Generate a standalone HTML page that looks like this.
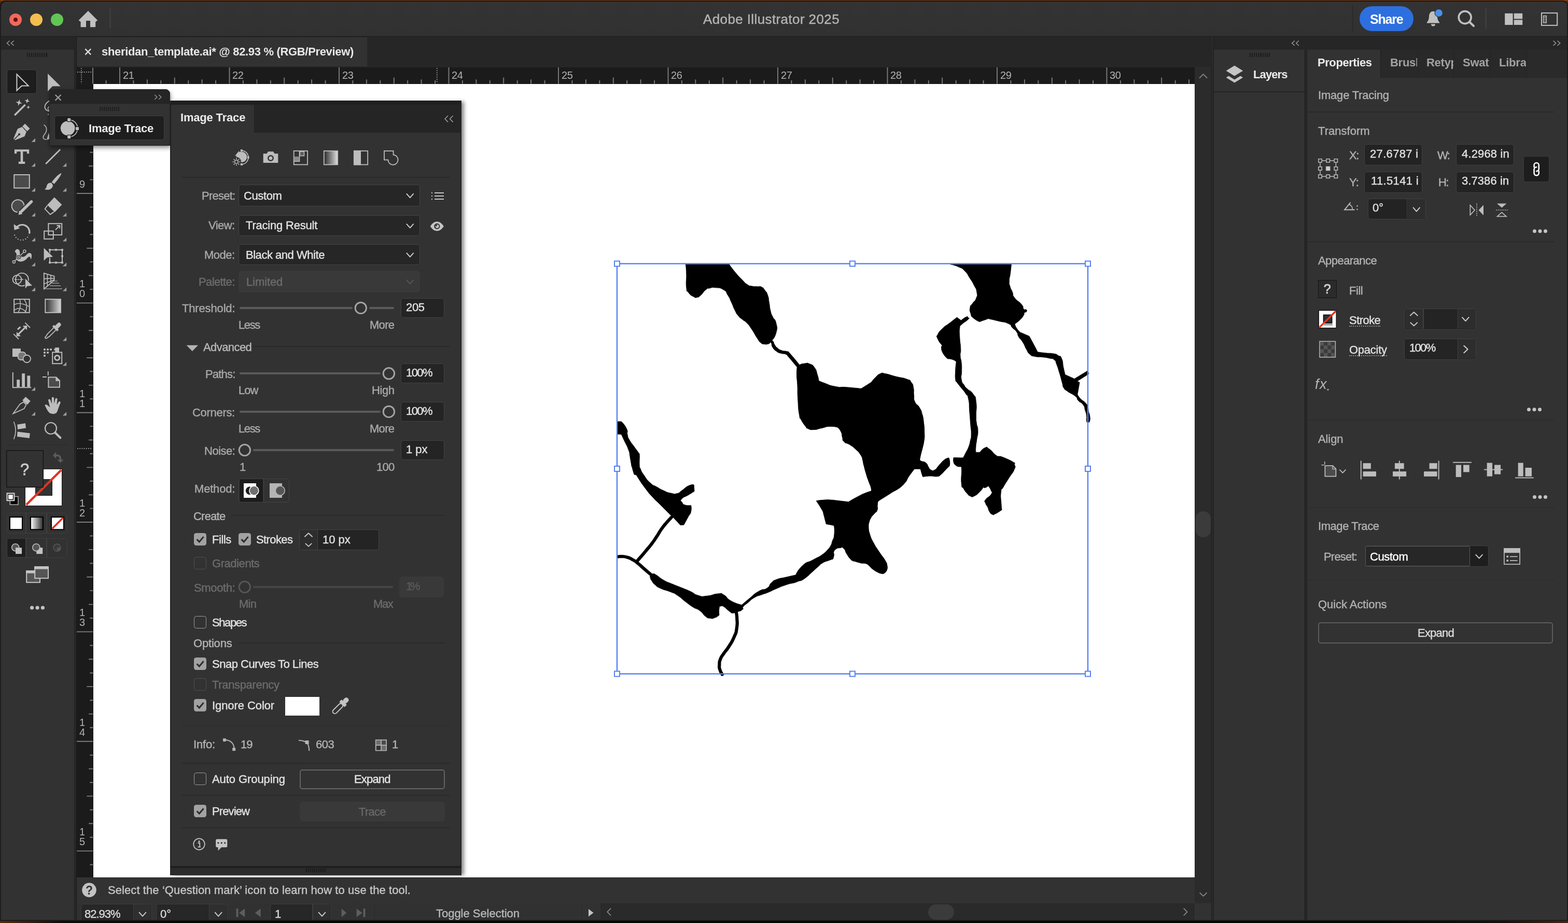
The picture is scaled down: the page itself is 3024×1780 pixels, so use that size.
<!DOCTYPE html>
<html lang="en"><head><meta charset="utf-8"><title>Adobe Illustrator 2025</title>
<style>
html,body{margin:0;padding:0;background:#8a4514;}
body{width:3024px;height:1780px;overflow:hidden;position:relative;font-family:"Liberation Sans",sans-serif;}
div,span,svg{position:absolute;box-sizing:border-box;}
span{white-space:nowrap;will-change:transform;}
svg text{will-change:transform;}
svg{overflow:visible;pointer-events:none;}
svg text{font-family:"Liberation Sans",sans-serif;}
</style></head><body>
<!-- chrome -->
<div style="left:0px;top:0px;width:3024px;height:1780px;background:linear-gradient(#8e4418,#4a260e 3px);"></div>
<div style="left:0px;top:1.4px;width:3024px;height:1779px;background:#161616;border-radius:11px 11px 0 0;"></div>
<div style="left:0px;top:20px;width:3024px;height:1760px;background:#1e1e1e;"></div>
<div style="left:1.6px;top:2.8px;width:3021px;height:67.4px;background:linear-gradient(#333333,#313131);border-radius:10px 10px 0 0;"></div>
<div style="left:1.6px;top:69.2px;width:3021px;height:1.2px;background:#2a2a2a;"></div>
<div style="left:18px;top:26px;width:24px;height:24px;background:#ed6a5e;border-radius:50%;"></div>
<div style="left:58px;top:26px;width:24px;height:24px;background:#f5bf4f;border-radius:50%;"></div>
<div style="left:98px;top:26px;width:24px;height:24px;background:#61c554;border-radius:50%;"></div>
<div style="left:26px;top:34px;width:8px;height:8px;background:#6e0c0a;border-radius:50%;"></div>
<div style="left:211px;top:16px;width:3px;height:39px;background:#3d3d3d;"></div>
<span style="left:1356.00px;top:24.00px;font-size:26px;line-height:26px;color:#b4b4b4;-webkit-text-stroke:0.4px;letter-spacing:0.391px;">Adobe Illustrator 2025</span>
<div style="left:2608px;top:10px;width:2px;height:51px;background:#2a2a2a;"></div>
<div style="left:2622px;top:12px;width:104px;height:48px;background:#2e6fdf;border-radius:24px;"></div>
<span style="left:2641.90px;top:25.00px;font-size:25px;line-height:25px;color:#ffffff;font-weight:700;letter-spacing:-1.217px;">Share</span>
<div style="left:2864px;top:16px;width:3px;height:39px;background:#3d3d3d;"></div>
<div style="left:0px;top:70.4px;width:3024px;height:1710px;background:#1e1e1e;"></div>
<div style="left:144.2px;top:71px;width:2.2px;height:1709px;background:#2a2a2a;"></div>
<div style="left:2517.6px;top:96px;width:2.4px;height:1684px;background:#2a2a2a;"></div>
<div style="left:2337.4px;top:71px;width:2.2px;height:1709px;background:#2a2a2a;"></div>
<div style="left:2px;top:71px;width:141px;height:25px;background:#262626;"></div>
<div style="left:2px;top:96px;width:141px;height:1684px;background:#323232;"></div>
<div style="left:148px;top:71px;width:2188.6px;height:58.7px;background:#262626;"></div>
<div style="left:148px;top:72px;width:560px;height:56.2px;background:#323232;"></div>
<span style="left:196.00px;top:89.00px;font-size:22px;line-height:22px;color:#e8e8e8;font-weight:700;letter-spacing:-0.328px;">sheridan_template.ai* @ 82.93 % (RGB/Preview)</span>
<div style="left:148px;top:129.7px;width:2156px;height:32.3px;background:#1b1b1b;"></div>
<div style="left:148px;top:129.7px;width:32px;height:1562.3px;background:#1b1b1b;"></div>
<div style="left:180px;top:162px;width:2124px;height:1530px;background:#ffffff;"></div>
<div style="left:2304px;top:129px;width:32px;height:1616px;background:#2b2b2b;"></div>
<div style="left:2306px;top:986px;width:29px;height:50px;background:#3b3b3b;border-radius:14px;"></div>
<div style="left:148px;top:1692px;width:2156px;height:53px;background:#323232;"></div>
<span style="left:208.00px;top:1706.00px;font-size:22px;line-height:22px;color:#c6c6c6;-webkit-text-stroke:0.4px;letter-spacing:0.085px;">Select the ‘Question mark’ icon to learn how to use the tool.</span>
<div style="left:148px;top:1742px;width:2156px;height:38px;background:#313131;"></div>
<div style="left:2304px;top:1742px;width:32px;height:38px;background:#323232;"></div>
<div style="left:2341px;top:71px;width:683px;height:25px;background:#262626;"></div>
<div style="left:2341px;top:96px;width:175px;height:1684px;background:#323232;"></div>
<div style="left:2341px;top:176px;width:175px;height:2px;background:#232323;"></div>
<div style="left:2521px;top:96px;width:503px;height:1684px;background:#323232;"></div>
<div style="left:2521px;top:96px;width:503px;height:54px;background:#262626;"></div>
<div style="left:2521px;top:96px;width:141px;height:54px;background:#323232;"></div>
<!-- rulers -->
<span style="left:236.60px;top:135.00px;font-size:20px;line-height:20px;color:#b2b2b2;letter-spacing:-0.323px;">21</span>
<span style="left:448.10px;top:135.00px;font-size:20px;line-height:20px;color:#b2b2b2;letter-spacing:-0.323px;">22</span>
<span style="left:659.60px;top:135.00px;font-size:20px;line-height:20px;color:#b2b2b2;letter-spacing:-0.323px;">23</span>
<span style="left:871.10px;top:135.00px;font-size:20px;line-height:20px;color:#b2b2b2;letter-spacing:-0.323px;">24</span>
<span style="left:1082.60px;top:135.00px;font-size:20px;line-height:20px;color:#b2b2b2;letter-spacing:-0.323px;">25</span>
<span style="left:1294.10px;top:135.00px;font-size:20px;line-height:20px;color:#b2b2b2;letter-spacing:-0.323px;">26</span>
<span style="left:1505.60px;top:135.00px;font-size:20px;line-height:20px;color:#b2b2b2;letter-spacing:-0.323px;">27</span>
<span style="left:1717.10px;top:135.00px;font-size:20px;line-height:20px;color:#b2b2b2;letter-spacing:-0.323px;">28</span>
<span style="left:1928.60px;top:135.00px;font-size:20px;line-height:20px;color:#b2b2b2;letter-spacing:-0.323px;">29</span>
<span style="left:2140.10px;top:135.00px;font-size:20px;line-height:20px;color:#b2b2b2;letter-spacing:-0.323px;">30</span>
<span style="left:153.04px;top:345.00px;font-size:20px;line-height:20px;color:#b2b2b2;">9</span>
<span style="left:153.04px;top:537.00px;font-size:20px;line-height:20px;color:#b2b2b2;">1</span>
<span style="left:153.04px;top:556.00px;font-size:20px;line-height:20px;color:#b2b2b2;">0</span>
<span style="left:153.04px;top:749.00px;font-size:20px;line-height:20px;color:#b2b2b2;">1</span>
<span style="left:153.04px;top:768.00px;font-size:20px;line-height:20px;color:#b2b2b2;">1</span>
<span style="left:153.04px;top:960.00px;font-size:20px;line-height:20px;color:#b2b2b2;">1</span>
<span style="left:153.04px;top:979.00px;font-size:20px;line-height:20px;color:#b2b2b2;">2</span>
<span style="left:153.04px;top:1171.00px;font-size:20px;line-height:20px;color:#b2b2b2;">1</span>
<span style="left:153.04px;top:1190.00px;font-size:20px;line-height:20px;color:#b2b2b2;">3</span>
<span style="left:153.04px;top:1383.00px;font-size:20px;line-height:20px;color:#b2b2b2;">1</span>
<span style="left:153.04px;top:1402.00px;font-size:20px;line-height:20px;color:#b2b2b2;">4</span>
<span style="left:153.04px;top:1594.00px;font-size:20px;line-height:20px;color:#b2b2b2;">1</span>
<span style="left:153.04px;top:1613.00px;font-size:20px;line-height:20px;color:#b2b2b2;">5</span>
<svg width="3024" height="1780" viewBox="0 0 3024 1780" style="left:0;top:0;">
<path d="M204.6 155.1V161.4M231.0 130V161.4M257.4 155.1V161.4M283.9 153.2V161.4M310.3 155.1V161.4M336.8 149.4V161.4M363.2 155.1V161.4M389.6 153.2V161.4M416.1 155.1V161.4M442.5 130V161.4M468.9 155.1V161.4M495.4 153.2V161.4M521.8 155.1V161.4M548.2 149.4V161.4M574.7 155.1V161.4M601.1 153.2V161.4M627.6 155.1V161.4M654.0 130V161.4M680.4 155.1V161.4M706.9 153.2V161.4M733.3 155.1V161.4M759.8 149.4V161.4M786.2 155.1V161.4M812.6 153.2V161.4M839.1 155.1V161.4M865.5 130V161.4M891.9 155.1V161.4M918.4 153.2V161.4M944.8 155.1V161.4M971.2 149.4V161.4M997.7 155.1V161.4M1024.1 153.2V161.4M1050.6 155.1V161.4M1077.0 130V161.4M1103.4 155.1V161.4M1129.9 153.2V161.4M1156.3 155.1V161.4M1182.8 149.4V161.4M1209.2 155.1V161.4M1235.6 153.2V161.4M1262.1 155.1V161.4M1288.5 130V161.4M1314.9 155.1V161.4M1341.4 153.2V161.4M1367.8 155.1V161.4M1394.2 149.4V161.4M1420.7 155.1V161.4M1447.1 153.2V161.4M1473.6 155.1V161.4M1500.0 130V161.4M1526.4 155.1V161.4M1552.9 153.2V161.4M1579.3 155.1V161.4M1605.8 149.4V161.4M1632.2 155.1V161.4M1658.6 153.2V161.4M1685.1 155.1V161.4M1711.5 130V161.4M1737.9 155.1V161.4M1764.4 153.2V161.4M1790.8 155.1V161.4M1817.2 149.4V161.4M1843.7 155.1V161.4M1870.1 153.2V161.4M1896.6 155.1V161.4M1923.0 130V161.4M1949.4 155.1V161.4M1975.9 153.2V161.4M2002.3 155.1V161.4M2028.8 149.4V161.4M2055.2 155.1V161.4M2081.6 153.2V161.4M2108.1 155.1V161.4M2134.5 130V161.4M2160.9 155.1V161.4M2187.4 153.2V161.4M2213.8 155.1V161.4M2240.2 149.4V161.4M2266.7 155.1V161.4M2293.1 153.2V161.4M173.4 188.1H179.2M171.1 214.5H179.2M173.4 240.9H179.2M167.3 267.3H179.2M173.4 293.7H179.2M171.1 320.2H179.2M173.4 346.6H179.2M148 373.0H179.2M173.4 399.4H179.2M171.1 425.8H179.2M173.4 452.3H179.2M167.3 478.7H179.2M173.4 505.1H179.2M171.1 531.5H179.2M173.4 557.9H179.2M148 584.4H179.2M173.4 610.8H179.2M171.1 637.2H179.2M173.4 663.6H179.2M167.3 690.0H179.2M173.4 716.4H179.2M171.1 742.9H179.2M173.4 769.3H179.2M148 795.7H179.2M173.4 822.1H179.2M171.1 848.5H179.2M173.4 875.0H179.2M167.3 901.4H179.2M173.4 927.8H179.2M171.1 954.2H179.2M173.4 980.6H179.2M148 1007.0H179.2M173.4 1033.5H179.2M171.1 1059.9H179.2M173.4 1086.3H179.2M167.3 1112.7H179.2M173.4 1139.1H179.2M171.1 1165.6H179.2M173.4 1192.0H179.2M148 1218.4H179.2M173.4 1244.8H179.2M171.1 1271.2H179.2M173.4 1297.7H179.2M167.3 1324.1H179.2M173.4 1350.5H179.2M171.1 1376.9H179.2M173.4 1403.3H179.2M148 1429.8H179.2M173.4 1456.2H179.2M171.1 1482.6H179.2M173.4 1509.0H179.2M167.3 1535.4H179.2M173.4 1561.8H179.2M171.1 1588.3H179.2M173.4 1614.7H179.2M148 1641.1H179.2M173.4 1667.5H179.2" stroke="#7c7c7c" stroke-width="1.9" fill="none"/>
<path d="M179 130.6V161.6" stroke="#7c7c7c" stroke-width="1.9"/>
<path d="M149 139H178M157 131V161" stroke="#8a8a8a" stroke-width="1.9" stroke-dasharray="2 2.2" fill="none"/>
<path d="M842.8 131V160" stroke="#8a8a8a" stroke-width="1.9" stroke-dasharray="2 2.2" fill="none"/>
<path d="M149 865H178" stroke="#8a8a8a" stroke-width="1.9" stroke-dasharray="2 2.2" fill="none"/>
</svg>
<!-- toolbar -->
<div style="left:52px;top:102px;width:2.1px;height:8.4px;background:#1d1d1d;"></div>
<div style="left:56.05px;top:102px;width:2.1px;height:8.4px;background:#1d1d1d;"></div>
<div style="left:60.1px;top:102px;width:2.1px;height:8.4px;background:#1d1d1d;"></div>
<div style="left:64.15px;top:102px;width:2.1px;height:8.4px;background:#1d1d1d;"></div>
<div style="left:68.2px;top:102px;width:2.1px;height:8.4px;background:#1d1d1d;"></div>
<div style="left:72.25px;top:102px;width:2.1px;height:8.4px;background:#1d1d1d;"></div>
<div style="left:76.3px;top:102px;width:2.1px;height:8.4px;background:#1d1d1d;"></div>
<div style="left:80.35px;top:102px;width:2.1px;height:8.4px;background:#1d1d1d;"></div>
<div style="left:84.4px;top:102px;width:2.1px;height:8.4px;background:#1d1d1d;"></div>
<div style="left:88.45px;top:102px;width:2.1px;height:8.4px;background:#1d1d1d;"></div>
<div style="left:12.8px;top:134.4px;width:58.2px;height:46.8px;background:#1d1d1d;border:1.3px solid #414141;border-radius:5px;"></div>
<div style="left:12px;top:858.1px;width:120px;height:1.4px;background:#2a2a2a;"></div>
<div style="left:48.4px;top:904.1px;width:71.8px;height:71.8px;background:#ffffff;border:1.4px solid #161616;"></div>
<div style="left:68.3px;top:923.6px;width:32.7px;height:32.4px;background:#323232;border:1.6px solid #1a1a1a;"></div>
<div style="left:12.5px;top:988.5px;width:117.2px;height:40.8px;background:transparent;border:1.2px solid #3e3e3e;border-radius:5px;"></div>
<div style="left:49.4px;top:989.5px;width:1.2px;height:39px;background:#3e3e3e;"></div>
<div style="left:89.4px;top:989.5px;width:1.2px;height:39px;background:#3e3e3e;"></div>
<div style="left:12.7px;top:1038.1px;width:117px;height:37.6px;background:transparent;border:1.2px solid #3e3e3e;border-radius:5px;"></div>
<div style="left:14px;top:1039.4px;width:35.3px;height:35px;background:#1e1e1e;border-radius:4px 0 0 4px;"></div>
<div style="left:49.4px;top:1039.2px;width:1.2px;height:35.4px;background:#3e3e3e;"></div>
<div style="left:89.4px;top:1039.2px;width:1.2px;height:35.4px;background:#3e3e3e;"></div>
<svg width="3024" height="1780" viewBox="0 0 3024 1780" style="left:0;top:0;">
<path d="M18.2 78.9L13.4 83.2L18.2 87.5" fill="none" stroke="#a0a0a0" stroke-width="1.4" stroke-linecap="round" stroke-linejoin="round"/>
<path d="M26.2 78.9L21.4 83.2L26.2 87.5" fill="none" stroke="#a0a0a0" stroke-width="1.4" stroke-linecap="round" stroke-linejoin="round"/>
<path d="M32.4 143.2V174.6L41.9 165.6H54.8Z" fill="none" stroke="#c8c8c8" stroke-width="2" stroke-linejoin="miter"/>
<path d="M92.1 142V176L101.3 166.2H116.6Z" fill="#bdbdbd"/>
<path d="M28.2 222.2L48.6 202" stroke="#bdbdbd" stroke-width="3.4" fill="none"/>
<path d="M36.6 191.8L38.212 196.388L42.800000000000004 198L38.212 199.612L36.6 204.2L34.988 199.612L30.400000000000002 198L34.988 196.388Z" fill="#bdbdbd" transform="rotate(12 36.6 198)"/>
<path d="M52.4 189.6L53.699999999999996 193.29999999999998L57.4 194.6L53.699999999999996 195.9L52.4 199.6L51.1 195.9L47.4 194.6L51.1 193.29999999999998Z" fill="#bdbdbd" transform="rotate(12 52.4 194.6)"/>
<path d="M54.6 203.20000000000002L55.536 205.864L58.2 206.8L55.536 207.73600000000002L54.6 210.4L53.664 207.73600000000002L51.0 206.8L53.664 205.864Z" fill="#bdbdbd" transform="rotate(12 54.6 206.8)"/>
<ellipse cx="101" cy="203.5" rx="15" ry="10.5" fill="none" stroke="#bdbdbd" stroke-width="1.8" transform="rotate(-20 101 203.5)"/><circle cx="96" cy="209.5" r="3.6" fill="none" stroke="#bdbdbd" stroke-width="1.6"/><circle cx="93" cy="220.6" r="1.1" fill="#bdbdbd"/>
<path d="M25.9 267.4L34 248.4L42.6 244.8L51 254L47.4 263L29.2 270.2Z" fill="#bdbdbd"/><path d="M43.2 243.7L48.2 238.6L57.5 247.9L52.4 253.1Z" fill="#bdbdbd"/><path d="M27.6 268.6L36.6 259.6" stroke="#323232" stroke-width="1.5"/><circle cx="37.1" cy="259.1" r="2.1" fill="#323232"/>
<path d="M68 273.8H60.7L68 266.5Z" fill="#9c9c9c"/>
<path d="M84.4 240.6C91.5 244.6 90.8 253.6 86 259C81.6 264 82.4 269 89.6 269.2" fill="none" stroke="#bdbdbd" stroke-width="1.6"/><path d="M90 269.4L94 256L96.5 268Z" fill="#bdbdbd"/>
<path d="M28.2 288.2H55.9Q56.2 288.2 56.2 288.6V296.2H51.9V292.3H44.3V311.8H48.2V316H35.8V311.8H39.7V292.3H32.2V296.2H27.9V288.6Q27.9 288.2 28.2 288.2Z" fill="#bdbdbd"/>
<path d="M68 321.6H60.7L68 314.3Z" fill="#9c9c9c"/>
<path d="M88.2 316L116.2 288.2" stroke="#bdbdbd" stroke-width="2.8" fill="none"/>
<path d="M128.2 321.6H120.89999999999999L128.2 314.3Z" fill="#9c9c9c"/>
<rect x="27.2" y="337" width="29.6" height="25.6" fill="#4b4b4b" stroke="#bdbdbd" stroke-width="2"/>
<path d="M68 369.6H60.7L68 362.3Z" fill="#9c9c9c"/>
<path d="M118.4 333.8C117.8 338 114 343.4 104.6 354.8L99.6 351.2C108 340.6 113.6 335.4 118.4 333.8Z" fill="#bdbdbd"/><path d="M98.4 352.6C94 352 90.6 355 90 359C89.5 362 88.2 363.8 86 365C92 367.4 99 365.6 101.4 360.2C102.6 357.2 101.6 354.6 98.4 352.6Z" fill="#bdbdbd"/>
<path d="M128.2 369.6H120.89999999999999L128.2 362.3Z" fill="#9c9c9c"/>
<circle cx="34.6" cy="397.2" r="12" fill="#4b4b4b" stroke="#bdbdbd" stroke-width="2"/><path d="M61 388.4L38.5 410.5L36 414.6" stroke="#323232" stroke-width="9.5" fill="none" stroke-linecap="round"/><path d="M60.6 388.8L41 408" stroke="#bdbdbd" stroke-width="5.4" fill="none" stroke-linecap="round"/><path d="M37 406L43.4 412.4L35.6 414.4Z" fill="#bdbdbd"/>
<path d="M68 417.6H60.7L68 410.3Z" fill="#9c9c9c"/>
<path d="M104.8 380.6L119.4 394.8L105.6 409.2L91 395.2Z" fill="#bdbdbd"/><path d="M91.4 396.4L86.6 402.8L96.8 413.6L104 408.6" fill="none" stroke="#bdbdbd" stroke-width="1.9" stroke-linejoin="round"/>
<path d="M128.2 417.6H120.89999999999999L128.2 410.3Z" fill="#9c9c9c"/>
<path d="M31.4 439.6A14 14 0 0 1 56.6 450.6" fill="none" stroke="#bdbdbd" stroke-width="3.2"/><path d="M26.6 432.2L27.6 443.8L38.4 440.2Z" fill="#bdbdbd"/><path d="M28 452.6A14.4 14.4 0 0 0 55.4 453.4" fill="none" stroke="#bdbdbd" stroke-width="2" stroke-dasharray="1.8 3.3"/>
<path d="M68 465.6H60.7L68 458.3Z" fill="#9c9c9c"/>
<rect x="93.4" y="431.2" width="25.8" height="21.8" fill="none" stroke="#bdbdbd" stroke-width="2"/><rect x="85.2" y="445.6" width="17.6" height="15.2" fill="none" stroke="#bdbdbd" stroke-width="2"/><path d="M107 443.2L114.6 435.6M109.4 435H115.2V440.8" fill="none" stroke="#bdbdbd" stroke-width="2"/>
<path d="M128.2 465.6H120.89999999999999L128.2 458.3Z" fill="#9c9c9c"/>
<path d="M28.6 485.6C29.6 480 35.4 478.6 37.4 483.2C39.4 487.8 37.2 492 40.6 494.4C45 497.2 49.6 493.4 52 490.4C55 486.6 60.4 486.6 61 492C61.4 495.4 60.4 498.6 59.6 500.6C59 496 57 493.6 54.4 496C50.6 499.6 46.8 505 38.6 504.4C32 503.8 29.8 498.8 31.4 494.6C32.8 491 31.6 487.6 28.6 485.6Z" fill="#bdbdbd"/><path d="M27 504.8L47.4 484.8" stroke="#bdbdbd" stroke-width="1.6"/><circle cx="26.9" cy="505" r="2.5" fill="#323232" stroke="#bdbdbd" stroke-width="1.5"/><circle cx="47.4" cy="484.6" r="2.5" fill="#323232" stroke="#bdbdbd" stroke-width="1.5"/><circle cx="36.2" cy="496" r="3.4" fill="#bdbdbd" stroke="#323232" stroke-width="1.4"/><circle cx="36.2" cy="496" r="1.3" fill="#323232"/>
<path d="M68 513.6H60.7L68 506.3Z" fill="#9c9c9c"/>
<rect x="96" y="481.8" width="24" height="24.6" fill="none" stroke="#bdbdbd" stroke-width="2"/><rect x="94.1" y="479.90000000000003" width="3.8" height="3.8" fill="#bdbdbd"/><rect x="106.1" y="479.90000000000003" width="3.8" height="3.8" fill="#bdbdbd"/><rect x="118.1" y="479.90000000000003" width="3.8" height="3.8" fill="#bdbdbd"/><rect x="118.1" y="492.1" width="3.8" height="3.8" fill="#bdbdbd"/><rect x="118.1" y="504.5" width="3.8" height="3.8" fill="#bdbdbd"/><rect x="106.1" y="504.5" width="3.8" height="3.8" fill="#bdbdbd"/><rect x="94.1" y="504.5" width="3.8" height="3.8" fill="#bdbdbd"/><path d="M84 476.8V504.2L90.8 497.2L103.4 495.6Z" fill="#bdbdbd" stroke="#323232" stroke-width="1.2"/>
<path d="M128.2 513.6H120.89999999999999L128.2 506.3Z" fill="#9c9c9c"/>
<circle cx="42.4" cy="539" r="12.4" fill="none" stroke="#bdbdbd" stroke-width="1.9"/><circle cx="33" cy="539" r="8.4" fill="none" stroke="#bdbdbd" stroke-width="1.9"/><path d="M28 539H46.5" stroke="#bdbdbd" stroke-width="1.9" stroke-dasharray="2 1.6"/><path d="M48.2 535.8V558.4L52.8 552.4L63.4 551.4Z" fill="#bdbdbd" stroke="#323232" stroke-width="1.2"/>
<path d="M68 561.6H60.7L68 554.3000000000001Z" fill="#9c9c9c"/>
<path d="M84.8 526.8L104.6 532.6V540.6L84.8 557.2Z" fill="none" stroke="#bdbdbd" stroke-width="1.8"/><path d="M84.8 537.6L104.6 536.6M84.8 547.6L104.6 539.6M91.4 528.8V551.8M98 530.8V546.2" fill="none" stroke="#bdbdbd" stroke-width="1.6"/><path d="M104.6 542H110.8M100.4 546.2H114M96 551.2H117M86.4 556.8H119.8" stroke="#8a8a8a" stroke-width="1.7"/>
<path d="M128.2 561.6H120.89999999999999L128.2 554.3000000000001Z" fill="#9c9c9c"/>
<rect x="27.2" y="577.1" width="29.6" height="25.7" fill="none" stroke="#bdbdbd" stroke-width="2"/><path d="M27.6 587.6C36 582.6 46 586 56.4 591.4M27.6 598.4C34.6 591.8 45 594.4 50.6 602.6M38.2 577.4C40.6 586 39.2 595 35.2 602.6M46.8 577.4C52.6 586 52.6 595 48.4 602.6" fill="none" stroke="#bdbdbd" stroke-width="1.5"/>
<defs><linearGradient id="tbg" x1="0" x2="1" y1="0" y2="0"><stop offset="0" stop-color="#2c2c2c"/><stop offset="1" stop-color="#d8d8d8"/></linearGradient><linearGradient id="tbg2" x1="0" x2="1" y1="0" y2="0"><stop offset="0" stop-color="#ffffff"/><stop offset="1" stop-color="#2a2a2a"/></linearGradient></defs><rect x="87.4" y="577.1" width="29.6" height="25.7" fill="url(#tbg)" stroke="#bdbdbd" stroke-width="2"/>
<path d="M48.4 622.4L58 632M26.2 644.2L36 654" stroke="#bdbdbd" stroke-width="1.8"/><path d="M35.6 644.4L47.6 632.6" stroke="#bdbdbd" stroke-width="3.2"/><path d="M52.4 627.8L51.8 636.6L43.6 628.4ZM31.6 648.8L32 640L40.2 648.2Z" fill="#bdbdbd"/><path d="M34 635.4L39.4 630.4" stroke="#bdbdbd" stroke-width="3.2"/>
<g transform="translate(101.9,638) rotate(45)"><rect x="-3.8" y="-20.6" width="7.6" height="13" rx="3.8" fill="#bdbdbd"/><rect x="-6.6" y="-9.8" width="13.2" height="4.8" rx="0.8" fill="#bdbdbd"/><path d="M-3 -5V12C-3 14 -1.9 14.6 -1.9 16.6V18.2A1.9 1.9 0 0 0 1.9 18.2V16.6C1.9 14.6 3 14 3 12V-5" fill="none" stroke="#bdbdbd" stroke-width="1.8"/></g>
<path d="M128.2 657.6H120.89999999999999L128.2 650.3000000000001Z" fill="#9c9c9c"/>
<rect x="24" y="672.2" width="16" height="15.8" fill="#bdbdbd"/><rect x="34.6" y="679" width="15" height="15" rx="5.4" fill="#777" stroke="#bdbdbd" stroke-width="1.8"/><circle cx="51.8" cy="692" r="7.2" fill="#323232" stroke="#bdbdbd" stroke-width="1.9"/>
<rect x="101.2" y="679.4" width="18" height="21.8" fill="none" stroke="#bdbdbd" stroke-width="2"/><circle cx="110.2" cy="690" r="4.6" fill="none" stroke="#bdbdbd" stroke-width="3"/><path d="M106.2 670.2H114V679H106.2Z M104.2 672.6H108V675.6H104.2Z" fill="#bdbdbd"/><circle cx="86" cy="674" r="2.1" fill="#bdbdbd"/><circle cx="92.1" cy="674" r="2.1" fill="#bdbdbd"/><circle cx="98.1" cy="674" r="2.1" fill="#bdbdbd"/><circle cx="86" cy="680" r="2.1" fill="#bdbdbd"/><circle cx="92.1" cy="680" r="2.1" fill="#bdbdbd"/><circle cx="86" cy="686" r="2.1" fill="#bdbdbd"/>
<path d="M128.2 705.6H120.89999999999999L128.2 698.3000000000001Z" fill="#9c9c9c"/>
<path d="M24.8 718V747.2H60.2" fill="none" stroke="#bdbdbd" stroke-width="2"/><rect x="32.3" y="732.2" width="5.8" height="14" fill="#bdbdbd"/><rect x="42.2" y="720.2" width="5.8" height="26" fill="#bdbdbd"/><rect x="52.4" y="724.4" width="5.8" height="21.8" fill="#bdbdbd"/>
<path d="M68 753.6H60.7L68 746.3000000000001Z" fill="#9c9c9c"/>
<path d="M93.4 727.4H108.4L115 734V746.8H93.4Z" fill="#4b4b4b" stroke="#bdbdbd" stroke-width="2"/><path d="M108 727.4V734.4H115" fill="#bdbdbd" stroke="#bdbdbd" stroke-width="1.2"/><path d="M92.8 716.2V724M82 727H89.8" stroke="#bdbdbd" stroke-width="1.9"/>
<path d="M25.4 797.6L38.4 779.4L45.4 775.2L50.4 780.6L46.6 788Z" fill="none" stroke="#bdbdbd" stroke-width="1.7" stroke-linejoin="miter"/><path d="M43.2 772L49.4 765.2L58.8 773.4L52.6 780.6Z" fill="#bdbdbd"/>
<path d="M68 801.6H60.7L68 794.3000000000001Z" fill="#9c9c9c"/>
<path d="M86.4 781.6C87.6 780 90 780 91.6 781.4L96.4 785.6L93.2 772.6C92.4 769.6 96.2 768.4 97.2 771.4L99.8 779L99.8 768C99.8 765 103.8 765 104 768L104.6 778.6L106.6 769.6C107.4 766.6 111 767.6 110.6 770.6L109.4 780.4L113 775.2C114.6 772.8 117.6 774.8 116.4 777.4C113 785 112 789.6 110.6 793C109 797 106.4 798.2 102 798.2C97.6 798.2 95.2 796.6 92.6 793C90.2 789.6 88.4 785.6 86.4 781.6Z" fill="#bdbdbd"/>
<path d="M128.2 801.6H120.89999999999999L128.2 794.3000000000001Z" fill="#9c9c9c"/>
<path d="M26.6 813.2C31.2 824 31.2 836 26.6 847" fill="none" stroke="#bdbdbd" stroke-width="1.6"/><path d="M33.2 818.8L49 816.2L50 825.4L34.2 828Z" fill="#bdbdbd"/><path d="M33.6 832.4L57.8 835.4L56.8 845L33 842Z" fill="#bdbdbd"/>
<circle cx="98" cy="826" r="11" fill="none" stroke="#bdbdbd" stroke-width="2.2"/><path d="M106.4 834.6L116.4 844.2" stroke="#bdbdbd" stroke-width="4.2" stroke-linecap="round"/>
<path d="M50.6 973.6L118 906.6" stroke="#e8311f" stroke-width="4.3"/>
<rect x="12.7" y="868.8" width="70.6" height="70.6" fill="#323232" stroke="#181818" stroke-width="1.6"/>
<text x="47.6" y="916" font-size="31" fill="#cacaca" stroke="#cacaca" stroke-width="0.8" text-anchor="middle">?</text>
<path d="M104 878.2H109.6C114 878.2 116.6 880.6 116.6 885V888" fill="none" stroke="#5c5c5c" stroke-width="3.4"/><path d="M102 878.2L108.2 871.6V884.8Z M116.6 892.6L110.4 886.4H122.8Z" fill="#5c5c5c"/>
<rect x="19.4" y="957.6" width="15.6" height="15.6" fill="#000" stroke="#bdbdbd" stroke-width="1.4"/><rect x="13.2" y="951" width="14.6" height="14.6" fill="#fff" stroke="#bdbdbd" stroke-width="1.6"/><rect x="15.4" y="953.2" width="10.2" height="10.2" fill="#fff" stroke="#000" stroke-width="1.4"/>
<rect x="19" y="997.2" width="24" height="24" fill="#fff" stroke="#000" stroke-width="2"/><rect x="59" y="997.2" width="24" height="24" fill="url(#tbg2)" stroke="#000" stroke-width="2"/><rect x="99" y="997.2" width="24" height="24" fill="#fff" stroke="#000" stroke-width="2"/><path d="M100.6 1019.6L121.4 998.8" stroke="#e8311f" stroke-width="3.6"/>
<circle cx="29.7" cy="1055.7" r="7" fill="#555" stroke="#bdbdbd" stroke-width="1.6"/><rect x="30" y="1056.2" width="12" height="12" fill="#c4c4c4"/><rect x="70.2" y="1056.2" width="12" height="12" fill="#c4c4c4"/><circle cx="69.8" cy="1055.7" r="7" fill="#555" stroke="#bdbdbd" stroke-width="1.6"/><circle cx="110" cy="1056.1" r="7" fill="#3a3a3a" stroke="#555" stroke-width="1.6"/><path d="M110 1056.1H117V1060A7 7 0 0 1 110 1063.1Z" fill="#555"/>
<rect x="51.2" y="1101" width="25.8" height="22.2" fill="#555" stroke="#c4c4c4" stroke-width="2"/><rect x="50.2" y="1100" width="27.8" height="5.6" fill="#c4c4c4"/><rect x="67.2" y="1093" width="25.8" height="22.2" fill="#555" stroke="#c4c4c4" stroke-width="2"/><rect x="66.2" y="1092" width="27.8" height="5.6" fill="#c4c4c4"/>
<circle cx="61.6" cy="1172" r="3.6" fill="#c4c4c4"/>
<circle cx="72" cy="1172" r="3.6" fill="#c4c4c4"/>
<circle cx="82.4" cy="1172" r="3.6" fill="#c4c4c4"/>
</svg>
<!-- artwork -->

<svg width="3024" height="1780" viewBox="0 0 3024 1780" style="left:0;top:0;">
<g fill="#000" stroke="#000" stroke-width="0.8" stroke-linejoin="round">
<path d="M1322.1 509.7C1322.1 509.7 1323.2 512.2 1323.7 527.0C1324.3 541.7 1322.4 541.5 1323.7 553.9C1325.1 566.4 1323.1 558.1 1327.8 564.2C1332.5 570.3 1332.2 569.2 1337.8 572.3C1343.3 575.3 1340.0 574.3 1344.5 573.4C1349.0 572.5 1345.7 574.4 1351.3 569.6C1356.8 564.7 1355.4 563.4 1361.2 558.8C1367.1 554.2 1362.7 557.2 1368.8 555.8C1374.9 554.5 1370.8 553.8 1379.6 554.8C1388.4 555.7 1387.1 553.9 1395.2 558.8C1403.3 563.7 1398.7 561.5 1403.8 569.6C1409.0 577.7 1406.1 573.5 1410.6 583.1C1415.1 592.7 1412.8 589.7 1417.3 598.4C1421.8 607.2 1419.1 603.2 1424.1 609.2C1429.0 615.3 1426.8 612.0 1432.2 616.5C1437.6 621.0 1434.4 616.6 1440.2 622.7C1446.1 628.8 1442.9 625.0 1449.7 634.9C1456.4 644.8 1454.6 643.7 1460.5 652.4C1466.3 661.1 1462.7 657.2 1467.2 661.0C1471.7 664.8 1469.0 663.0 1474.0 663.7C1478.9 664.4 1477.7 664.1 1482.0 663.2C1486.4 662.3 1484.2 658.8 1486.9 661.0C1489.6 663.3 1486.4 664.3 1490.1 669.9C1493.9 675.6 1492.8 674.2 1498.2 678.0C1503.6 681.9 1500.5 679.7 1506.3 681.5C1512.2 683.3 1510.8 681.0 1515.8 683.4C1520.7 685.8 1514.0 680.5 1521.2 688.8C1528.3 697.1 1537.3 708.2 1537.3 708.2C1537.3 708.2 1541.9 703.6 1541.9 703.6C1541.9 703.6 1531.7 690.6 1523.9 682.1C1516.0 673.5 1523.9 680.1 1518.5 678.0C1513.1 675.9 1514.0 678.1 1507.7 675.9C1501.4 673.6 1504.1 674.9 1499.6 671.3C1495.1 667.7 1496.9 669.1 1494.2 665.1C1491.5 661.0 1493.3 662.0 1491.5 659.1C1489.7 656.3 1488.8 656.4 1488.8 656.4C1488.8 656.4 1494.2 652.6 1496.9 641.6C1499.6 630.6 1499.1 633.9 1496.9 623.5C1494.6 613.2 1493.7 618.5 1490.1 610.6C1486.5 602.7 1488.3 608.8 1486.1 599.8C1483.8 590.8 1485.2 593.7 1483.4 583.6C1481.6 573.5 1483.4 577.5 1480.7 569.6C1478.0 561.7 1479.4 565.3 1475.3 559.9C1471.3 554.5 1473.5 555.8 1468.6 553.4C1463.6 551.0 1466.8 553.1 1460.5 552.6C1454.2 552.1 1456.2 553.1 1449.7 551.8C1443.2 550.4 1447.3 552.8 1441.1 548.6C1434.8 544.3 1438.7 547.2 1430.8 539.1C1422.9 531.0 1425.4 534.1 1417.3 524.3C1409.2 514.5 1406.5 509.7 1406.5 509.7C1406.5 509.7 1322.1 509.7 1322.1 509.7Z"/>
<path d="M1537.3 708.2C1537.3 708.2 1537.0 706.1 1541.9 703.6C1546.9 701.2 1545.6 701.6 1552.2 700.9C1558.7 700.3 1555.3 699.1 1561.6 701.8C1567.9 704.5 1566.1 702.1 1571.0 709.0C1576.0 716.0 1573.7 714.2 1576.4 722.5C1579.1 730.9 1579.1 734.1 1579.1 734.1C1579.1 734.1 1579.1 734.9 1589.9 738.7C1600.7 742.5 1597.1 742.8 1611.5 745.4C1625.9 748.1 1616.4 745.4 1633.1 746.8C1649.7 748.1 1661.4 749.5 1661.4 749.5C1661.4 749.5 1667.3 745.3 1673.5 741.4C1679.7 737.5 1680.0 737.9 1680.0 737.9C1680.0 737.9 1680.0 900.0 1680.0 900.0C1680.0 900.0 1666.8 900.0 1666.8 900.0C1666.8 900.0 1666.3 895.9 1664.1 888.4C1661.8 880.9 1664.5 884.8 1660.0 877.6C1655.5 870.4 1657.8 873.6 1650.6 866.8C1643.4 860.1 1645.9 862.3 1638.5 857.4C1631.0 852.4 1632.7 856.5 1628.2 852.0C1623.7 847.5 1627.0 850.2 1625.0 843.9C1623.0 837.6 1625.2 839.6 1622.3 833.1C1619.4 826.6 1616.4 824.5 1616.4 824.5C1616.4 824.5 1611.3 822.0 1600.7 822.3C1590.1 822.7 1594.9 823.5 1584.5 825.6C1574.2 827.6 1578.7 828.3 1569.7 828.5C1560.7 828.8 1563.0 828.4 1557.6 826.4C1552.2 824.3 1557.6 827.7 1553.5 822.3C1549.5 816.9 1549.5 817.8 1545.4 810.2C1541.4 802.5 1543.6 812.9 1541.4 799.4C1539.1 785.9 1539.9 788.6 1538.7 769.7C1537.5 750.8 1538.6 758.0 1537.9 742.8C1537.2 727.5 1536.7 735.4 1536.5 723.9C1536.3 712.4 1537.3 708.2 1537.3 708.2Z"/>
<path d="M1190.2 812.9C1190.2 812.9 1198.3 812.9 1198.3 812.9C1198.3 812.9 1204.4 817.8 1208.3 826.4C1212.3 834.9 1208.4 831.3 1210.2 838.5C1212.0 845.7 1209.4 840.3 1213.7 847.9C1218.0 855.6 1216.6 852.3 1223.1 861.4C1229.7 870.6 1233.4 875.5 1233.4 875.5C1233.4 875.5 1232.6 900.0 1232.6 900.0C1232.6 900.0 1218.3 900.0 1218.3 900.0C1218.3 900.0 1217.2 891.4 1215.1 880.3C1212.9 869.3 1215.4 876.7 1211.8 866.8C1208.2 856.9 1208.8 860.4 1204.3 850.6C1199.8 840.9 1198.3 837.7 1198.3 837.7C1198.3 837.7 1190.2 837.2 1190.2 837.2C1190.2 837.2 1190.2 812.9 1190.2 812.9Z"/>
<path d="M1832.6 509.7C1832.6 509.7 1839.3 510.4 1848.8 514.8C1858.2 519.2 1853.7 515.7 1860.9 522.9C1868.1 530.1 1864.5 527.4 1870.4 536.4C1876.2 545.4 1874.0 540.9 1878.4 549.9C1882.9 558.9 1882.5 554.8 1883.8 563.4C1885.2 571.9 1885.2 568.3 1882.5 575.5C1879.8 582.7 1879.6 579.1 1875.7 585.0C1871.9 590.8 1872.1 586.3 1870.9 593.1C1869.7 599.8 1870.2 598.4 1872.2 605.2C1874.3 611.9 1871.4 608.2 1877.1 613.3C1882.8 618.4 1889.2 620.6 1889.2 620.6C1889.2 620.6 1906.0 614.6 1906.0 614.6C1906.0 614.6 1912.8 616.1 1925.6 619.2C1938.5 622.4 1935.5 619.8 1944.5 624.1C1953.5 628.4 1947.2 626.8 1952.6 632.2C1958.0 637.6 1956.7 634.4 1960.7 640.3C1964.7 646.1 1960.7 643.0 1964.7 649.7C1968.8 656.4 1967.9 652.4 1972.8 660.5C1977.8 668.6 1975.1 666.3 1979.6 674.0C1984.1 681.6 1980.9 678.9 1986.3 683.4C1991.7 687.9 1987.7 685.7 1995.8 687.5C2003.9 689.3 2001.2 687.6 2010.6 688.8C2020.0 690.0 2016.4 689.2 2024.1 691.0C2031.7 692.8 2029.0 690.4 2033.5 694.2C2038.0 698.0 2034.4 694.2 2037.6 702.3C2040.7 710.4 2039.4 706.8 2043.0 718.5C2046.6 730.2 2045.5 727.5 2048.3 737.4C2051.2 747.2 2048.0 742.3 2051.6 748.1C2055.2 754.0 2051.7 749.5 2059.1 754.9C2066.6 760.3 2067.2 758.5 2074.0 764.3C2080.7 770.2 2074.4 767.0 2079.4 772.4C2084.3 777.8 2084.3 774.2 2088.8 780.5C2093.3 786.8 2090.6 784.1 2092.8 791.3C2095.1 798.5 2094.6 795.3 2095.5 802.1C2096.4 808.8 2094.6 807.5 2095.5 811.5C2096.4 815.6 2096.2 814.2 2098.2 814.2C2100.3 814.2 2100.6 815.6 2101.7 811.5C2102.9 807.5 2102.5 807.9 2101.7 802.1C2101.0 796.2 2100.8 799.4 2099.6 794.0C2098.4 788.6 2100.0 791.3 2098.2 785.9C2096.4 780.5 2099.1 783.7 2094.2 777.8C2089.3 772.0 2088.8 774.2 2083.4 768.4C2078.0 762.5 2078.0 760.3 2078.0 760.3C2078.0 760.3 2079.4 753.1 2080.7 745.4C2082.1 737.8 2082.1 737.4 2082.1 737.4C2082.1 737.4 2077.5 735.2 2077.5 735.2C2077.5 735.2 2089.8 727.6 2096.9 722.8C2104.0 717.9 2098.2 722.4 2098.8 720.6C2099.4 718.8 2099.6 718.8 2098.8 717.4C2098.0 716.0 2098.1 716.3 2096.4 716.3C2094.6 716.3 2101.7 712.6 2093.7 717.4C2085.6 722.2 2072.1 730.6 2072.1 730.6C2072.1 730.6 2054.3 722.5 2054.3 722.5C2054.3 722.5 2053.3 719.4 2051.0 709.0C2048.8 698.7 2051.0 699.3 2047.5 691.5C2044.1 683.7 2045.9 688.7 2040.8 685.6C2035.7 682.4 2040.4 683.7 2032.2 682.1C2023.9 680.4 2026.3 681.8 2016.0 680.7C2005.6 679.6 2001.2 678.8 2001.2 678.8C2001.2 678.8 1998.5 673.3 1993.1 663.2C1987.7 653.0 1985.0 648.3 1985.0 648.3C1985.0 648.3 1967.4 640.8 1967.4 640.8C1967.4 640.8 1962.5 636.4 1959.4 630.8C1956.2 625.2 1958.0 624.1 1958.0 624.1C1958.0 624.1 1962.0 621.9 1967.4 616.5C1972.8 611.1 1971.5 612.3 1974.2 607.9C1976.9 603.5 1973.7 605.6 1975.5 603.3C1977.3 601.1 1978.4 603.2 1979.6 601.1C1980.7 599.1 1980.8 598.9 1979.0 597.1C1977.2 595.3 1977.2 599.2 1974.2 595.8C1971.2 592.3 1976.0 594.0 1970.1 586.9C1964.3 579.7 1962.5 582.0 1956.7 574.2C1950.8 566.4 1955.5 570.6 1952.6 563.4C1949.7 556.2 1950.1 559.8 1948.0 552.6C1946.0 545.4 1946.2 550.3 1946.4 541.8C1946.6 533.3 1947.2 537.7 1948.6 527.0C1949.9 516.3 1950.5 509.7 1950.5 509.7C1950.5 509.7 1832.6 509.7 1832.6 509.7Z"/>
<path d="M1845.5 611.9C1845.5 611.9 1853.6 617.9 1853.6 617.9C1853.6 617.9 1859.1 612.8 1863.6 611.1C1868.1 609.4 1866.0 611.1 1867.1 612.7C1868.3 614.4 1871.4 611.5 1867.1 616.0C1862.8 620.5 1859.6 620.8 1854.2 626.2C1848.8 631.6 1852.0 623.9 1850.9 632.2C1849.9 640.4 1850.3 637.6 1850.9 651.0C1851.6 664.5 1852.5 660.9 1852.8 672.6C1853.2 684.3 1851.6 677.1 1852.0 686.1C1852.5 695.1 1853.3 689.7 1854.2 699.6C1855.1 709.5 1854.7 705.0 1854.7 715.8C1854.7 726.6 1852.6 723.0 1854.2 732.0C1855.8 741.0 1856.0 736.9 1859.6 742.8C1863.2 748.6 1859.1 743.7 1865.0 749.5C1870.8 755.3 1871.3 751.7 1877.1 760.3C1882.9 768.8 1880.7 761.2 1882.5 775.1C1884.3 789.1 1882.2 788.6 1882.5 802.1C1882.8 815.6 1882.1 806.1 1883.3 815.6C1884.5 825.0 1885.8 819.6 1886.0 830.4C1886.2 841.2 1885.2 837.6 1883.8 847.9C1882.5 858.3 1882.6 853.3 1882.0 861.4C1881.3 869.5 1882.0 872.2 1882.0 872.2C1882.0 872.2 1890.0 872.2 1890.0 872.2C1890.0 872.2 1894.0 865.4 1900.0 863.3C1906.0 861.2 1900.0 860.4 1908.1 866.0C1916.2 871.7 1913.5 873.3 1924.3 880.3C1935.1 887.3 1931.0 883.0 1940.5 887.1C1949.9 891.1 1947.2 888.1 1952.6 892.4C1958.0 896.8 1956.7 900.0 1956.7 900.0C1956.7 900.0 1848.8 900.0 1848.8 900.0C1848.8 900.0 1843.3 899.6 1840.2 893.8C1837.0 888.0 1839.3 882.5 1839.3 882.5C1839.3 882.5 1842.7 882.8 1848.8 883.0C1854.9 883.2 1857.7 883.0 1857.7 883.0C1857.7 883.0 1858.9 880.3 1862.3 873.6C1865.6 866.8 1864.7 870.4 1867.7 862.8C1870.6 855.1 1869.4 859.2 1871.2 850.6C1873.0 842.1 1872.9 847.9 1873.1 837.2C1873.2 826.4 1872.8 832.7 1871.7 818.3C1870.6 803.9 1871.2 810.2 1869.8 794.0C1868.5 777.8 1870.2 781.4 1867.7 769.7C1865.1 758.0 1867.2 766.6 1862.3 758.9C1857.3 751.3 1858.4 754.0 1852.8 746.8C1847.3 739.6 1848.9 742.3 1845.5 737.4C1842.2 732.4 1843.8 739.2 1842.8 732.0C1841.9 724.8 1842.1 727.0 1842.6 715.8C1843.0 704.5 1844.2 698.2 1844.2 698.2C1844.2 698.2 1843.5 695.7 1838.0 693.7C1832.5 691.6 1827.7 692.0 1827.7 692.0C1827.7 692.0 1820.6 686.7 1817.0 678.0C1813.4 669.3 1817.0 665.9 1817.0 665.9C1817.0 665.9 1811.0 660.4 1808.3 653.2C1805.6 646.0 1805.3 651.3 1808.9 644.3C1812.5 637.3 1812.1 638.9 1819.1 632.2C1826.1 625.4 1821.1 630.8 1829.9 624.1C1838.7 617.3 1845.5 611.9 1845.5 611.9Z"/>
<path d="M1809.7 900.0C1809.7 900.0 1813.7 893.9 1820.5 888.4C1827.2 882.9 1829.9 883.5 1829.9 883.5C1829.9 883.5 1832.2 891.0 1831.3 896.5C1830.4 902.0 1827.2 900.0 1827.2 900.0C1827.2 900.0 1809.7 900.0 1809.7 900.0Z"/>
<path d="M1660.0 749.5C1660.0 749.5 1659.6 750.1 1665.4 746.8C1671.2 743.5 1670.3 745.4 1677.5 739.5C1684.7 733.7 1680.2 735.6 1687.0 729.3C1693.7 723.0 1691.0 723.5 1697.8 720.6C1704.5 717.8 1697.3 718.8 1707.2 720.6C1717.1 722.4 1713.5 722.5 1727.4 726.0C1741.4 729.5 1738.9 727.4 1749.0 731.2C1759.1 734.9 1753.4 731.7 1757.6 737.4C1761.9 743.0 1760.1 740.1 1761.7 748.1C1763.3 756.2 1761.5 752.6 1762.5 761.6C1763.5 770.6 1761.0 767.0 1764.6 775.1C1768.2 783.2 1768.6 777.8 1773.3 785.9C1777.9 794.0 1776.0 789.5 1778.7 799.4C1781.4 809.3 1780.0 803.9 1781.4 815.6C1782.7 827.3 1782.5 822.8 1782.7 834.5C1782.9 846.1 1783.7 839.0 1781.9 850.6C1780.1 862.3 1780.0 858.7 1777.3 869.5C1774.6 880.3 1774.7 876.7 1773.8 883.0C1772.9 889.3 1770.8 885.3 1774.6 888.4C1778.5 891.5 1780.5 888.6 1785.4 892.4C1790.3 896.3 1789.4 900.0 1789.4 900.0C1789.4 900.0 1667.0 900.0 1667.0 900.0C1667.0 900.0 1665.4 895.1 1665.4 895.1C1665.4 895.1 1663.2 883.0 1663.2 883.0C1663.2 883.0 1660.0 874.4 1660.0 874.4C1660.0 874.4 1660.0 749.5 1660.0 749.5Z"/>
<path d="M1663.2 880.0C1663.2 880.0 1773.8 880.0 1773.8 880.0C1773.8 880.0 1772.5 883.3 1773.3 886.7C1774.0 890.2 1772.2 888.5 1776.0 890.2C1779.7 892.0 1780.3 889.4 1784.6 892.1C1788.9 894.8 1785.5 893.6 1788.9 898.3C1792.3 903.1 1790.3 903.7 1794.8 906.4C1799.3 909.1 1797.0 909.4 1802.4 906.4C1807.8 903.5 1805.5 903.5 1811.0 897.5C1816.6 891.6 1814.2 893.1 1819.1 888.6C1824.1 884.1 1822.1 885.8 1825.9 884.0C1829.6 882.2 1830.4 883.2 1830.4 883.2C1830.4 883.2 1831.5 896.2 1831.5 896.2C1831.5 896.2 1827.7 900.3 1821.8 906.4C1815.9 912.5 1819.1 910.6 1813.7 914.5C1808.3 918.5 1812.8 917.2 1805.6 918.3C1798.4 919.4 1800.7 917.3 1792.1 917.8C1783.6 918.2 1780.0 919.6 1780.0 919.6C1780.0 919.6 1778.8 917.5 1777.3 912.4C1775.8 907.2 1775.4 904.3 1775.4 904.3C1775.4 904.3 1763.8 904.3 1763.8 904.3C1763.8 904.3 1762.5 905.6 1754.4 916.4C1746.3 927.2 1753.0 924.5 1739.6 936.6C1726.1 948.8 1728.8 943.4 1713.9 952.8C1699.1 962.3 1702.3 958.2 1695.1 965.0C1687.9 971.7 1693.4 966.8 1692.4 973.1C1691.3 979.3 1694.1 978.0 1691.8 983.8C1689.6 989.7 1690.4 985.6 1685.6 990.6C1680.9 995.5 1681.1 989.7 1677.5 998.7C1673.9 1007.7 1674.8 1006.8 1674.8 1017.6C1674.8 1028.3 1674.4 1021.6 1677.5 1031.0C1680.7 1040.5 1678.4 1035.1 1684.3 1045.9C1690.1 1056.7 1687.4 1051.7 1695.1 1063.4C1702.7 1075.1 1702.0 1072.0 1707.2 1080.9C1712.4 1089.9 1709.5 1085.0 1710.7 1090.4C1711.9 1095.8 1711.9 1092.6 1710.7 1097.1C1709.5 1101.6 1710.6 1100.9 1707.2 1103.9C1703.8 1106.8 1705.8 1106.5 1700.5 1106.0C1695.1 1105.6 1696.9 1105.5 1691.0 1102.5C1685.2 1099.6 1689.2 1102.1 1682.9 1097.1C1676.6 1092.2 1679.8 1091.3 1672.1 1087.7C1664.5 1084.1 1660.0 1086.3 1660.0 1086.3C1660.0 1086.3 1660.0 955.0 1660.0 955.0C1660.0 955.0 1663.1 953.2 1669.4 950.7C1675.7 948.2 1678.9 947.4 1678.9 947.4C1678.9 947.4 1681.6 948.3 1680.2 940.7C1678.9 933.0 1678.4 935.7 1674.8 924.5C1671.2 913.3 1672.6 918.2 1669.4 907.0C1666.3 895.7 1667.5 899.8 1665.4 890.8C1663.3 881.8 1663.2 880.0 1663.2 880.0Z"/>
<path d="M1839.3 882.7C1839.3 882.7 1857.7 883.0 1857.7 883.0C1857.7 883.0 1859.0 880.0 1859.0 880.0C1859.0 880.0 1929.7 880.0 1929.7 880.0C1929.7 880.0 1943.6 884.9 1952.6 890.2C1961.6 895.6 1955.5 891.1 1956.7 896.2C1957.8 901.3 1959.7 897.1 1956.1 905.6C1952.5 914.2 1952.9 910.6 1945.9 921.8C1938.9 933.0 1940.2 930.3 1935.1 939.3C1930.0 948.3 1931.8 938.0 1930.5 948.8C1929.1 959.6 1930.4 960.3 1931.0 971.7C1931.7 983.1 1932.4 983.0 1932.4 983.0C1932.4 983.0 1925.7 988.2 1919.4 991.1C1913.1 994.1 1917.3 993.5 1913.5 991.9C1909.7 990.4 1911.0 991.0 1908.1 986.5C1905.2 982.0 1907.4 983.8 1904.9 978.4C1902.4 973.1 1902.0 975.3 1900.6 970.4C1899.1 965.4 1897.0 969.3 1900.6 963.6C1904.2 958.0 1907.8 959.2 1911.3 953.4C1914.9 947.5 1913.1 951.5 1911.3 946.1C1909.6 940.7 1906.0 937.2 1906.0 937.2C1906.0 937.2 1902.5 940.1 1899.5 940.7C1896.4 941.2 1896.8 938.8 1896.8 938.8C1896.8 938.8 1895.3 942.8 1889.2 948.8C1883.1 954.8 1884.3 954.2 1878.4 956.9C1872.6 959.6 1876.2 958.7 1871.7 956.9C1867.2 955.1 1869.5 956.4 1865.0 951.5C1860.5 946.5 1861.8 948.3 1858.2 942.0C1854.6 935.7 1855.5 946.1 1854.2 932.6C1852.8 919.1 1855.5 913.5 1854.2 901.6C1852.8 889.6 1854.8 899.0 1850.1 896.7C1845.5 894.5 1840.2 894.8 1840.2 894.8C1840.2 894.8 1839.3 882.7 1839.3 882.7Z"/>
<path d="M1215.1 880.0C1215.1 880.0 1233.4 880.0 1233.4 880.0C1233.4 880.0 1232.5 888.1 1233.1 896.2C1233.8 904.3 1232.3 897.5 1235.3 904.3C1238.3 911.0 1235.7 907.4 1242.0 916.4C1248.3 925.4 1246.1 923.8 1254.2 931.2C1262.3 938.7 1257.8 933.9 1266.3 938.8C1274.8 943.7 1270.8 942.0 1279.8 946.1C1288.8 950.1 1284.5 949.1 1293.3 950.9C1302.1 952.7 1299.0 953.1 1306.2 951.5C1313.4 949.9 1307.5 951.0 1314.8 946.1C1322.2 941.1 1320.5 940.2 1328.3 936.6C1336.1 933.0 1338.3 935.3 1338.3 935.3C1338.3 935.3 1339.1 947.4 1339.1 947.4C1339.1 947.4 1336.4 949.2 1328.3 954.2C1320.2 959.1 1319.1 957.3 1314.8 962.3C1310.6 967.2 1313.4 965.1 1315.7 969.0C1317.9 972.9 1316.0 972.1 1321.6 973.9C1327.2 975.7 1332.4 974.4 1332.4 974.4C1332.4 974.4 1334.4 978.9 1332.6 986.5C1330.8 994.2 1331.6 988.8 1327.0 997.3C1322.4 1005.9 1318.9 1012.2 1318.9 1012.2C1318.9 1012.2 1312.1 1012.7 1312.1 1012.7C1312.1 1012.7 1309.4 1009.7 1304.6 1004.6C1299.8 999.5 1301.6 1001.1 1297.9 997.3C1294.1 993.6 1301.1 1000.9 1293.3 993.3C1285.4 985.6 1286.1 986.1 1274.4 974.4C1262.7 962.7 1268.1 969.0 1258.2 958.2C1248.3 947.4 1254.2 954.6 1244.7 942.0C1235.3 929.4 1235.3 929.0 1229.9 920.5C1224.5 911.9 1228.5 916.4 1228.5 916.4C1228.5 916.4 1223.1 915.1 1223.1 915.1C1223.1 915.1 1221.4 910.6 1219.1 901.6C1216.9 892.6 1217.8 895.3 1216.4 888.1C1215.1 880.9 1215.1 880.0 1215.1 880.0Z"/>
<path d="M1254.2 1110.6C1256.0 1108.1 1255.5 1107.0 1259.6 1106.6C1263.6 1106.1 1259.6 1105.2 1266.3 1109.3C1273.0 1113.3 1269.9 1113.1 1279.8 1118.7C1289.7 1124.3 1284.3 1121.0 1296.0 1126.0C1307.7 1130.9 1303.2 1128.8 1314.8 1133.5C1326.5 1138.3 1320.2 1135.3 1331.0 1140.3C1341.8 1145.2 1336.4 1145.4 1347.2 1148.4C1358.0 1151.3 1350.8 1150.4 1363.4 1149.2C1376.0 1148.0 1374.2 1145.6 1385.0 1144.9C1395.7 1144.1 1387.2 1142.3 1395.7 1147.0C1404.3 1151.8 1398.9 1152.7 1410.6 1159.2C1422.3 1165.6 1430.8 1166.4 1430.8 1166.4C1430.8 1166.4 1434.9 1162.5 1445.6 1153.8C1456.4 1145.0 1451.9 1146.8 1463.2 1140.3C1474.4 1133.7 1471.3 1139.5 1479.4 1134.1C1487.4 1128.7 1481.2 1129.7 1487.4 1124.1C1493.7 1118.5 1488.3 1121.0 1498.2 1117.4C1508.1 1113.8 1505.0 1116.0 1517.1 1113.3C1529.2 1110.6 1534.6 1109.3 1534.6 1109.3C1534.6 1109.3 1536.9 1100.3 1548.1 1090.4C1559.4 1080.5 1555.3 1086.8 1568.3 1079.6C1581.4 1072.4 1576.4 1076.9 1587.2 1068.8C1598.0 1060.7 1594.4 1063.4 1600.7 1055.3C1607.0 1047.2 1603.2 1052.6 1606.1 1044.5C1609.0 1036.4 1608.4 1041.8 1609.3 1031.0C1610.2 1020.3 1608.8 1012.2 1608.8 1012.2C1608.8 1012.2 1594.0 1010.8 1594.0 1010.8C1594.0 1010.8 1593.5 1003.6 1589.9 993.3C1586.3 982.9 1588.4 988.8 1583.2 979.8C1578.0 970.8 1574.3 966.3 1574.3 966.3C1574.3 966.3 1580.2 964.3 1592.6 964.2C1605.0 964.0 1597.1 964.3 1611.5 965.8C1625.9 967.2 1635.8 968.5 1635.8 968.5C1635.8 968.5 1643.0 964.2 1654.6 958.2C1666.3 952.3 1662.4 954.1 1670.8 950.7C1679.3 947.3 1680.0 948.0 1680.0 948.0C1680.0 948.0 1680.0 998.7 1680.0 998.7C1680.0 998.7 1677.9 1000.5 1676.2 1006.8C1674.5 1013.1 1674.4 1009.5 1674.9 1017.6C1675.3 1025.7 1675.9 1024.3 1677.6 1031.0C1679.3 1037.8 1680.0 1037.8 1680.0 1037.8C1680.0 1037.8 1680.0 1094.4 1680.0 1094.4C1680.0 1094.4 1680.2 1090.6 1669.5 1086.3C1658.8 1082.1 1658.2 1085.3 1647.9 1081.8C1637.6 1078.2 1645.2 1083.5 1638.5 1075.5C1631.7 1067.6 1634.0 1064.3 1627.7 1058.0C1621.4 1051.7 1625.0 1056.2 1619.6 1056.7C1614.2 1057.1 1615.5 1056.7 1611.5 1059.4C1607.5 1062.1 1609.1 1058.5 1607.5 1064.8C1605.8 1071.1 1606.6 1078.2 1606.6 1078.2C1606.6 1078.2 1600.0 1077.8 1587.2 1085.0C1574.5 1092.2 1580.0 1090.4 1568.3 1099.8C1556.7 1109.3 1562.1 1106.1 1552.2 1113.3C1542.3 1120.5 1550.4 1116.6 1538.7 1121.4C1527.0 1126.2 1530.6 1123.1 1517.1 1127.6C1503.6 1132.1 1509.9 1130.0 1498.2 1134.9C1486.5 1139.7 1491.9 1138.1 1482.0 1142.2C1472.2 1146.2 1477.6 1143.6 1468.6 1147.0C1459.6 1150.4 1463.6 1147.5 1455.1 1152.4C1446.5 1157.4 1450.1 1156.0 1442.9 1161.9C1435.8 1167.7 1437.1 1165.5 1433.5 1170.0C1429.9 1174.4 1435.8 1172.0 1432.2 1175.3C1428.6 1178.7 1429.6 1177.5 1422.7 1179.9C1415.8 1182.4 1411.4 1182.6 1411.4 1182.6C1411.4 1182.6 1409.1 1180.9 1403.8 1176.7C1398.6 1172.5 1400.2 1172.5 1395.7 1170.0C1391.3 1167.4 1393.2 1168.2 1390.4 1169.1C1387.5 1170.0 1388.2 1167.0 1387.1 1172.7C1386.0 1178.3 1387.1 1186.1 1387.1 1186.1C1387.1 1186.1 1384.3 1189.5 1378.2 1191.5C1372.1 1193.6 1374.6 1193.2 1368.8 1192.3C1362.9 1191.4 1367.0 1193.6 1360.7 1188.8C1354.4 1184.1 1358.0 1184.1 1349.9 1178.0C1341.8 1172.0 1345.4 1176.4 1336.4 1170.8C1327.4 1165.1 1332.8 1168.5 1322.9 1161.1C1313.0 1153.6 1316.6 1154.8 1306.8 1148.4C1296.9 1141.9 1304.1 1146.1 1293.3 1141.6C1282.5 1137.1 1284.3 1139.4 1274.4 1134.9C1264.5 1130.4 1269.4 1133.1 1263.6 1128.1C1257.8 1123.2 1260.0 1124.7 1256.9 1120.1C1253.7 1115.4 1255.1 1117.3 1254.2 1114.1C1253.3 1111.0 1252.4 1113.1 1254.2 1110.6Z"/>
<path d="M1661.4 880.0C1661.4 880.0 1663.2 879.1 1665.4 885.4C1667.7 891.7 1665.4 888.1 1668.1 898.9C1670.8 909.7 1669.6 904.7 1673.5 917.8C1677.5 930.8 1680.0 938.0 1680.0 938.0C1680.0 938.0 1680.0 880.0 1680.0 880.0C1680.0 880.0 1661.4 880.0 1661.4 880.0Z"/>
<path d="M1542.6 800.0C1542.6 800.0 1543.3 803.2 1546.9 809.7C1550.5 816.2 1549.4 813.9 1553.4 819.4C1557.3 825.0 1553.4 823.3 1558.7 826.3C1564.1 829.3 1561.3 828.8 1569.5 828.5C1577.8 828.2 1573.1 827.5 1583.6 825.5C1594.0 823.4 1590.0 822.6 1600.8 822.2C1611.6 821.9 1615.9 824.4 1615.9 824.4C1615.9 824.4 1619.5 827.2 1622.4 833.4C1625.3 839.7 1622.8 837.0 1624.6 843.2C1626.4 849.3 1622.8 846.9 1627.8 851.8C1632.8 856.7 1632.1 853.2 1639.7 857.8C1647.2 862.5 1644.3 860.3 1650.4 865.8C1656.6 871.4 1653.7 868.7 1658.0 874.4C1662.3 880.2 1660.9 876.2 1663.4 883.1C1665.9 889.9 1663.4 885.2 1665.5 894.9C1667.7 904.7 1666.6 901.1 1669.9 912.2C1673.1 923.4 1671.9 918.7 1675.3 928.4C1678.6 938.1 1678.6 934.9 1680.0 941.3C1681.4 947.8 1679.6 947.8 1679.6 947.8C1679.6 947.8 1678.1 947.4 1669.9 950.6C1661.6 953.9 1665.9 951.8 1654.8 957.5C1643.6 963.3 1636.4 967.9 1636.4 967.9C1636.4 967.9 1629.9 967.0 1618.1 965.7C1606.2 964.4 1610.9 964.4 1600.8 964.0C1590.8 963.6 1596.5 963.8 1587.9 964.4C1579.2 965.0 1574.9 965.7 1574.9 965.7C1574.9 965.7 1575.6 966.7 1579.2 972.6C1582.8 978.5 1582.5 976.2 1585.7 983.4C1589.0 990.6 1586.9 987.0 1589.0 994.2C1591.0 1001.4 1590.3 999.6 1591.8 1005.0C1593.2 1010.4 1593.3 1010.4 1593.3 1010.4C1593.3 1010.4 1595.8 1010.8 1600.8 1011.9C1605.9 1013.0 1608.4 1013.6 1608.4 1013.6C1608.4 1013.6 1610.1 1020.8 1609.0 1030.9C1607.9 1041.0 1607.5 1036.6 1605.1 1043.8C1602.8 1051.0 1605.1 1046.7 1601.9 1052.5C1598.7 1058.2 1600.8 1055.3 1595.4 1061.1C1590.0 1066.8 1593.3 1064.3 1585.7 1069.7C1578.2 1075.1 1580.7 1072.7 1572.8 1077.3C1564.9 1081.8 1569.9 1078.8 1562.0 1083.3C1554.1 1087.8 1555.2 1086.1 1549.0 1090.9C1542.9 1095.7 1548.1 1091.9 1543.6 1097.8C1539.2 1103.7 1535.7 1108.6 1535.7 1108.6C1535.7 1108.6 1530.2 1109.8 1518.8 1112.4C1507.5 1115.1 1509.8 1114.0 1501.6 1116.5C1493.3 1119.1 1494.0 1120.0 1494.0 1120.0C1494.0 1120.0 1544.7 1120.0 1544.7 1120.0C1544.7 1120.0 1548.3 1118.5 1555.5 1112.9C1562.7 1107.3 1559.1 1109.6 1566.3 1103.2C1573.5 1096.7 1570.3 1099.4 1577.1 1093.5C1583.9 1087.5 1580.3 1089.2 1586.8 1085.3C1593.3 1081.3 1590.0 1084.0 1596.5 1081.6C1603.0 1079.1 1606.2 1077.9 1606.2 1077.9C1606.2 1077.9 1607.7 1075.7 1608.4 1070.8C1609.1 1065.9 1606.2 1067.9 1608.4 1063.3C1610.5 1058.6 1610.9 1059.2 1614.8 1056.8C1618.8 1054.4 1616.1 1055.8 1620.2 1056.1C1624.4 1056.5 1623.0 1053.7 1627.4 1057.9C1631.7 1062.0 1628.4 1061.5 1633.2 1068.6C1638.0 1075.8 1636.1 1074.6 1641.8 1079.4C1647.6 1084.3 1644.0 1080.9 1650.4 1083.1C1656.9 1085.3 1654.4 1084.6 1661.2 1085.9C1668.1 1087.2 1665.9 1085.2 1670.9 1087.0C1676.0 1088.8 1671.7 1087.3 1676.3 1091.3C1681.0 1095.3 1677.8 1094.2 1685.0 1098.9C1692.2 1103.5 1691.4 1103.2 1697.9 1105.3C1704.4 1107.5 1700.6 1106.8 1704.4 1105.3C1708.1 1103.9 1707.0 1105.0 1709.1 1101.0C1711.3 1097.1 1711.4 1099.6 1710.9 1093.5C1710.3 1087.3 1711.9 1090.9 1707.6 1082.7C1703.3 1074.4 1704.7 1078.7 1697.9 1068.6C1691.1 1058.6 1693.2 1062.9 1687.1 1052.5C1681.0 1042.0 1683.5 1047.4 1679.6 1037.4C1675.6 1027.3 1676.8 1029.8 1675.3 1022.3C1673.7 1014.7 1674.6 1019.7 1674.8 1014.7C1675.0 1009.7 1674.8 1012.2 1675.9 1007.1C1677.0 1002.1 1678.1 999.6 1678.1 999.6C1678.1 999.6 1680.5 996.9 1685.0 992.0C1689.4 987.2 1691.4 985.1 1691.4 985.1C1691.4 985.1 1690.5 981.1 1691.4 974.8C1692.4 968.5 1694.2 966.1 1694.2 966.1C1694.2 966.1 1698.8 963.3 1708.7 957.1C1718.5 950.8 1713.7 953.9 1723.8 947.4C1733.9 940.9 1731.0 944.7 1738.9 937.7C1746.8 930.6 1741.8 934.4 1747.5 926.2C1753.3 918.1 1751.0 920.7 1756.2 913.3C1761.3 905.9 1763.1 904.0 1763.1 904.0C1763.1 904.0 1775.1 904.0 1775.1 904.0C1775.1 904.0 1776.2 907.1 1777.7 912.2C1779.3 917.3 1779.9 919.3 1779.9 919.3C1779.9 919.3 1782.8 918.7 1788.5 918.2C1794.3 917.8 1790.7 917.9 1797.2 918.0C1803.6 918.2 1802.2 919.5 1807.9 918.7C1813.7 917.8 1809.4 919.4 1814.4 915.4C1819.4 911.5 1817.4 912.6 1823.0 906.8C1828.7 901.1 1831.2 898.2 1831.2 898.2C1831.2 898.2 1832.1 895.5 1831.7 890.6C1831.2 885.7 1829.9 883.5 1829.9 883.5C1829.9 883.5 1826.8 883.8 1822.0 886.7C1817.1 889.7 1819.8 888.0 1815.5 892.4C1811.2 896.7 1813.2 895.1 1809.0 899.7C1804.8 904.3 1807.5 904.0 1803.0 906.2C1798.4 908.3 1799.7 908.3 1795.4 906.2C1791.1 904.0 1793.2 903.8 1790.0 899.7C1786.9 895.6 1789.0 896.5 1785.9 893.9C1782.9 891.2 1785.0 893.9 1781.0 891.7C1776.9 889.5 1773.9 887.4 1773.9 887.4C1773.9 887.4 1773.6 886.7 1775.6 877.7C1777.6 868.7 1777.7 870.5 1779.9 860.4C1782.0 850.3 1781.2 856.8 1782.0 847.5C1782.9 838.1 1782.6 842.4 1782.5 832.4C1782.3 822.3 1782.8 828.1 1781.6 817.3C1780.4 806.5 1778.8 800.0 1778.8 800.0C1778.8 800.0 1542.6 800.0 1542.6 800.0Z"/>
</g>
<g fill="none" stroke="#000" stroke-width="6.2" stroke-linecap="round" stroke-linejoin="round">
<path d="M1296.5 996.0C1293.2 999.6 1293.4 998.7 1286.5 1006.8C1279.6 1014.9 1282.5 1010.8 1275.7 1020.3C1269.0 1029.7 1272.6 1025.7 1266.3 1035.1C1260.0 1044.5 1264.1 1039.1 1256.9 1048.6C1249.7 1058.0 1254.2 1052.2 1244.7 1063.4C1235.3 1074.7 1233.9 1076.0 1228.5 1082.3"/>
<path d="M1191.9 1073.7C1194.2 1073.5 1192.9 1072.8 1198.9 1073.1C1204.8 1073.5 1202.5 1072.6 1209.7 1074.7C1216.9 1076.9 1213.3 1075.5 1220.5 1079.6C1227.6 1083.7 1223.6 1081.0 1231.2 1087.1C1238.9 1093.3 1234.8 1090.6 1243.4 1097.9C1251.9 1105.3 1252.4 1105.5 1256.9 1109.3"/>
<path d="M1419.5 1179.4C1420.1 1183.9 1420.9 1182.1 1421.3 1192.9C1421.7 1203.7 1422.6 1200.1 1420.8 1211.8C1419.0 1223.5 1420.8 1216.8 1416.0 1228.0C1411.2 1239.2 1413.2 1234.7 1406.5 1245.5C1399.8 1256.3 1401.5 1251.8 1395.8 1260.3C1390.1 1268.8 1392.2 1263.9 1389.4 1271.1C1386.6 1278.3 1387.7 1275.2 1387.4 1282.0C1387.1 1288.8 1386.6 1285.3 1388.4 1291.5C1390.2 1297.7 1391.3 1297.6 1392.8 1300.6"/>
</g>
<rect x="1190" y="508.5" width="908" height="791.0" fill="none" stroke="#5681f3" stroke-width="2.4"/>
<rect x="1185" y="503.5" width="10" height="10" fill="#fff" stroke="#5681f3" stroke-width="2"/>
<rect x="1639.0" y="503.5" width="10" height="10" fill="#fff" stroke="#5681f3" stroke-width="2"/>
<rect x="2093" y="503.5" width="10" height="10" fill="#fff" stroke="#5681f3" stroke-width="2"/>
<rect x="1185" y="899.0" width="10" height="10" fill="#fff" stroke="#5681f3" stroke-width="2"/>
<rect x="2093" y="899.0" width="10" height="10" fill="#fff" stroke="#5681f3" stroke-width="2"/>
<rect x="1185" y="1294.5" width="10" height="10" fill="#fff" stroke="#5681f3" stroke-width="2"/>
<rect x="1639.0" y="1294.5" width="10" height="10" fill="#fff" stroke="#5681f3" stroke-width="2"/>
<rect x="2093" y="1294.5" width="10" height="10" fill="#fff" stroke="#5681f3" stroke-width="2"/>
</svg>
<!-- rightpanel -->
<div style="left:2410.2px;top:102px;width:2.1px;height:8.4px;background:#1d1d1d;"></div>
<div style="left:2414.25px;top:102px;width:2.1px;height:8.4px;background:#1d1d1d;"></div>
<div style="left:2418.3px;top:102px;width:2.1px;height:8.4px;background:#1d1d1d;"></div>
<div style="left:2422.35px;top:102px;width:2.1px;height:8.4px;background:#1d1d1d;"></div>
<div style="left:2426.4px;top:102px;width:2.1px;height:8.4px;background:#1d1d1d;"></div>
<div style="left:2430.45px;top:102px;width:2.1px;height:8.4px;background:#1d1d1d;"></div>
<div style="left:2434.5px;top:102px;width:2.1px;height:8.4px;background:#1d1d1d;"></div>
<div style="left:2438.55px;top:102px;width:2.1px;height:8.4px;background:#1d1d1d;"></div>
<div style="left:2442.6px;top:102px;width:2.1px;height:8.4px;background:#1d1d1d;"></div>
<div style="left:2446.65px;top:102px;width:2.1px;height:8.4px;background:#1d1d1d;"></div>
<span style="left:2416.50px;top:133.00px;font-size:22px;line-height:22px;color:#ececec;font-weight:700;letter-spacing:-0.891px;">Layers</span>
<span style="left:2540.70px;top:110.00px;font-size:22px;line-height:22px;color:#ececec;font-weight:700;letter-spacing:-0.432px;">Properties</span>
<div style="left:2662.6px;top:96px;width:70.5px;height:54px;background:#292929;border-left:1.3px solid #232323;"></div>
<span style="left:2680.60px;top:110.00px;font-size:22px;line-height:22px;color:#a2a2a2;font-weight:700;letter-spacing:-0.277px;width:51.9px;overflow:hidden;height:30px;">Brushes</span>
<div style="left:2733.1px;top:96px;width:70.2px;height:54px;background:#292929;border-left:1.3px solid #232323;"></div>
<span style="left:2751.10px;top:110.00px;font-size:22px;line-height:22px;color:#a2a2a2;font-weight:700;letter-spacing:-0.269px;width:51.6px;overflow:hidden;height:30px;">Retype</span>
<div style="left:2803.3px;top:96px;width:70px;height:54px;background:#292929;border-left:1.3px solid #232323;"></div>
<span style="left:2821.30px;top:110.00px;font-size:22px;line-height:22px;color:#a2a2a2;font-weight:700;letter-spacing:-0.279px;width:51.4px;overflow:hidden;height:30px;">Swatches</span>
<div style="left:2873.3px;top:96px;width:70.5px;height:54px;background:#292929;border-left:1.3px solid #232323;"></div>
<span style="left:2891.30px;top:110.00px;font-size:22px;line-height:22px;color:#a2a2a2;font-weight:700;letter-spacing:-0.227px;width:51.9px;overflow:hidden;height:30px;">Libraries</span>
<div style="left:2943.8px;top:96px;width:80.2px;height:54px;background:#2a2a2a;border-left:1.3px solid #232323;"></div>
<div style="left:2662.6px;top:149px;width:361.4px;height:1.4px;background:#262626;"></div>
<span style="left:2542.30px;top:173.00px;font-size:22px;line-height:22px;color:#b2b2b2;-webkit-text-stroke:0.4px;letter-spacing:-0.193px;">Image Tracing</span>
<div style="left:2521.6px;top:215.4px;width:476px;height:1.6px;background:#2a2a2a;"></div>
<span style="left:2542.30px;top:242.00px;font-size:22px;line-height:22px;color:#b2b2b2;-webkit-text-stroke:0.4px;letter-spacing:0.020px;">Transform</span>
<div style="left:2631.4px;top:278.4px;width:111.2px;height:41px;background:#232323;border:1.3px solid #404040;border-radius:5px;"></div>
<span style="left:2601.50px;top:289.00px;font-size:22px;line-height:22px;color:#b2b2b2;-webkit-text-stroke:0.4px;letter-spacing:-1.393px;">X:</span>
<span style="left:2642.40px;top:286.00px;font-size:22px;line-height:22px;color:#e0e0e0;-webkit-text-stroke:0.4px;letter-spacing:0.330px;">27.6787 i</span>
<div style="left:2808.3px;top:278.4px;width:111.4px;height:41px;background:#232323;border:1.3px solid #404040;border-radius:5px;"></div>
<span style="left:2772.40px;top:289.00px;font-size:22px;line-height:22px;color:#b2b2b2;-webkit-text-stroke:0.4px;letter-spacing:-1.740px;">W:</span>
<span style="left:2818.80px;top:286.00px;font-size:22px;line-height:22px;color:#e0e0e0;-webkit-text-stroke:0.4px;letter-spacing:0.141px;">4.2968 in</span>
<div style="left:2631.4px;top:331px;width:111.2px;height:40.6px;background:#232323;border:1.3px solid #404040;border-radius:5px;"></div>
<span style="left:2601.50px;top:341.00px;font-size:22px;line-height:22px;color:#b2b2b2;-webkit-text-stroke:0.4px;letter-spacing:-0.787px;">Y:</span>
<span style="left:2643.80px;top:338.00px;font-size:22px;line-height:22px;color:#e0e0e0;-webkit-text-stroke:0.4px;letter-spacing:0.356px;">11.5141 i</span>
<div style="left:2808.3px;top:331px;width:111.4px;height:40.6px;background:#232323;border:1.3px solid #404040;border-radius:5px;"></div>
<span style="left:2773.70px;top:341.00px;font-size:22px;line-height:22px;color:#b2b2b2;-webkit-text-stroke:0.4px;letter-spacing:-1.300px;">H:</span>
<span style="left:2819.40px;top:338.00px;font-size:22px;line-height:22px;color:#e0e0e0;-webkit-text-stroke:0.4px;letter-spacing:0.075px;">3.7386 in</span>
<div style="left:2937.7px;top:301.1px;width:50.3px;height:50px;background:#1d1d1d;border:1.3px solid #3a3a3a;border-radius:5px;"></div>
<div style="left:2638.3px;top:383px;width:112px;height:39.8px;background:#232323;border:1.3px solid #404040;border-radius:5px;"></div>
<div style="left:2713.2px;top:384.3px;width:1.3px;height:37.2px;background:#404040;"></div>
<div style="left:2714.5px;top:384.3px;width:34.5px;height:37.2px;background:#2d2d2d;border-radius:0 4px 4px 0;"></div>
<span style="left:2646.60px;top:390.00px;font-size:22px;line-height:22px;color:#e0e0e0;-webkit-text-stroke:0.4px;">0°</span>
<div style="left:2521.6px;top:465.4px;width:476px;height:1.6px;background:#2a2a2a;"></div>
<span style="left:2542.30px;top:492.00px;font-size:22px;line-height:22px;color:#b2b2b2;-webkit-text-stroke:0.4px;letter-spacing:-0.555px;">Appearance</span>
<div style="left:2542.3px;top:539.6px;width:35.8px;height:35.2px;background:#2b2b2b;border:1.5px solid #141414;"></div>
<span style="left:2602.30px;top:550.00px;font-size:22px;line-height:22px;color:#b2b2b2;-webkit-text-stroke:0.4px;letter-spacing:-0.451px;">Fill</span>
<span style="left:2602.30px;top:607.00px;font-size:22px;line-height:22px;color:#e0e0e0;-webkit-text-stroke:0.4px;letter-spacing:-0.548px;border-bottom:2px dotted #8c8c8c;height:23px;">Stroke</span>
<div style="left:2708.2px;top:594.9px;width:138.8px;height:40.8px;background:#242424;border:1.3px solid #404040;border-radius:5px;"></div>
<div style="left:2709.5px;top:596.2px;width:34.8px;height:38.2px;background:#2d2d2d;border-radius:4px 0 0 4px;"></div>
<div style="left:2744.3px;top:596.2px;width:1.3px;height:38.2px;background:#404040;"></div>
<div style="left:2810.5px;top:596.2px;width:1.3px;height:38.2px;background:#404040;"></div>
<div style="left:2811.8px;top:596.2px;width:33.9px;height:38.2px;background:#2d2d2d;border-radius:0 4px 4px 0;"></div>
<span style="left:2602.30px;top:664.00px;font-size:22px;line-height:22px;color:#e0e0e0;-webkit-text-stroke:0.4px;letter-spacing:-0.269px;border-bottom:2px dotted #8c8c8c;height:23px;">Opacity</span>
<div style="left:2708.2px;top:653px;width:138.8px;height:40.6px;background:#242424;border:1.3px solid #404040;border-radius:5px;"></div>
<div style="left:2810.5px;top:654.3px;width:1.3px;height:38px;background:#404040;"></div>
<div style="left:2811.8px;top:654.3px;width:33.9px;height:38px;background:#2d2d2d;border-radius:0 4px 4px 0;"></div>
<span style="left:2717.90px;top:660.00px;font-size:22px;line-height:22px;color:#e0e0e0;-webkit-text-stroke:0.4px;letter-spacing:-1.692px;">100%</span>
<span style="left:2536.40px;top:728.00px;font-size:27px;line-height:27px;color:#b8b8b8;font-style:italic;letter-spacing:1.500px;">fx</span>
<div style="left:2521.6px;top:809.8px;width:476px;height:1.6px;background:#2a2a2a;"></div>
<span style="left:2542.30px;top:836.00px;font-size:22px;line-height:22px;color:#b2b2b2;-webkit-text-stroke:0.4px;letter-spacing:-0.105px;">Align</span>
<div style="left:2521.6px;top:977.5px;width:476px;height:1.6px;background:#2a2a2a;"></div>
<span style="left:2542.30px;top:1004.00px;font-size:22px;line-height:22px;color:#b2b2b2;-webkit-text-stroke:0.4px;letter-spacing:-0.435px;">Image Trace</span>
<span style="left:2553.40px;top:1063.00px;font-size:22px;line-height:22px;color:#b2b2b2;-webkit-text-stroke:0.4px;letter-spacing:-0.800px;">Preset:</span>
<div style="left:2632.7px;top:1052.1px;width:238.4px;height:41px;background:#1e1e1e;border:1.3px solid #404040;border-radius:5px;"></div>
<div style="left:2633.4px;top:1053px;width:202px;height:39.4px;background:#272727;border:1.3px solid #5a5a5a;border-radius:2px;"></div>
<span style="left:2642.40px;top:1063.00px;font-size:22px;line-height:22px;color:#ffffff;-webkit-text-stroke:0.4px;letter-spacing:-0.416px;">Custom</span>
<div style="left:2521.6px;top:1117.7px;width:476px;height:1.6px;background:#2a2a2a;"></div>
<span style="left:2542.30px;top:1155.00px;font-size:22px;line-height:22px;color:#b2b2b2;-webkit-text-stroke:0.4px;letter-spacing:-0.060px;">Quick Actions</span>
<div style="left:2542.3px;top:1199.5px;width:453.2px;height:41px;background:transparent;border:2px solid #5c5c5c;border-radius:5px;"></div>
<span style="left:2733.75px;top:1210.00px;font-size:22px;line-height:22px;color:#dcdcdc;-webkit-text-stroke:0.4px;letter-spacing:-0.786px;">Expand</span>
<svg width="3024" height="1780" viewBox="0 0 3024 1780" style="left:0;top:0;">
<path d="M2496.4 78.9L2491.6 83.2L2496.4 87.5" fill="none" stroke="#a0a0a0" stroke-width="1.4" stroke-linecap="round" stroke-linejoin="round"/>
<path d="M2504.4 78.9L2499.6 83.2L2504.4 87.5" fill="none" stroke="#a0a0a0" stroke-width="1.4" stroke-linecap="round" stroke-linejoin="round"/>
<path d="M2996.0 78.9L3000.8 83.2L2996.0 87.5" fill="none" stroke="#a0a0a0" stroke-width="1.4" stroke-linecap="round" stroke-linejoin="round"/>
<path d="M3004.0 78.9L3008.8 83.2L3004.0 87.5" fill="none" stroke="#a0a0a0" stroke-width="1.4" stroke-linecap="round" stroke-linejoin="round"/>
<path d="M2380.8 126.4L2397.2 136.6L2380.8 146.4L2364.6 136.6Z" fill="#c4c4c4"/><path d="M2364.6 146.2L2369.6 143.2L2380.8 150L2392.2 143.2L2397.2 146.2L2380.8 156.2Z" fill="#c4c4c4" transform="translate(0,3.4)"/>
<rect x="2542.8" y="306.6" width="6.4" height="6.4" fill="none" stroke="#bdbdbd" stroke-width="1.5"/><rect x="2542.8" y="321.8" width="6.4" height="6.4" fill="none" stroke="#bdbdbd" stroke-width="1.5"/><rect x="2542.8" y="337.0" width="6.4" height="6.4" fill="none" stroke="#bdbdbd" stroke-width="1.5"/><rect x="2558.0" y="306.6" width="6.4" height="6.4" fill="none" stroke="#bdbdbd" stroke-width="1.5"/><rect x="2557.6" y="321.4" width="7.2" height="7.2" fill="#d0d0d0" stroke="#bdbdbd" stroke-width="1.4"/><rect x="2558.0" y="337.0" width="6.4" height="6.4" fill="none" stroke="#bdbdbd" stroke-width="1.5"/><rect x="2573.2000000000003" y="306.6" width="6.4" height="6.4" fill="none" stroke="#bdbdbd" stroke-width="1.5"/><rect x="2573.2000000000003" y="321.8" width="6.4" height="6.4" fill="none" stroke="#bdbdbd" stroke-width="1.5"/><rect x="2573.2000000000003" y="337.0" width="6.4" height="6.4" fill="none" stroke="#bdbdbd" stroke-width="1.5"/><path d="M2549.6 309.8H2557.8M2564.8 309.8H2572.8M2549.6 340.2H2557.8M2564.8 340.2H2572.8M2546 313.4V321.4M2546 328.6V336.6M2576.4 313.4V321.4M2576.4 328.6V336.6" stroke="#bdbdbd" stroke-width="1.5"/>
<g fill="none" stroke="#ffffff" stroke-width="2.6" stroke-linecap="round"><path d="M2958.6 322V318.6A4.6 4.6 0 0 1 2967.8 318.6V325.6A4.6 4.6 0 0 1 2963.2 330.2"/><path d="M2967.8 330.4V333.8A4.6 4.6 0 0 1 2958.6 333.8V326.8A4.6 4.6 0 0 1 2963.2 322.2"/></g>
<path d="M2604.6 390.4L2593.2 404.4H2612.6" fill="none" stroke="#bdbdbd" stroke-width="2"/><path d="M2602 394.4A9 9 0 0 1 2608.2 403.6" fill="none" stroke="#bdbdbd" stroke-width="1.8"/><rect x="2616.4" y="396" width="2.2" height="2.4" fill="#bdbdbd"/><rect x="2616.4" y="402.6" width="2.2" height="2.4" fill="#bdbdbd"/>
<path d="M2725.6 400.4L2731.8 407.6L2738.0 400.4" fill="none" stroke="#d0d0d0" stroke-width="1.9" stroke-linecap="round" stroke-linejoin="round"/>
<path d="M2835.4 395.8V414.6L2844 405.2Z" fill="none" stroke="#bdbdbd" stroke-width="1.7"/><path d="M2861 395.2V415.2L2851.6 405.2Z" fill="#bdbdbd"/><path d="M2848 392.6V418" stroke="#bdbdbd" stroke-width="1.6" stroke-dasharray="1.8 1.8"/>
<path d="M2887 392.4H2905.6L2896.3 400.6Z" fill="#bdbdbd"/><path d="M2887.6 417.4H2905L2896.3 409.6Z" fill="none" stroke="#bdbdbd" stroke-width="1.7"/><path d="M2885 405H2908" stroke="#bdbdbd" stroke-width="1.6" stroke-dasharray="1.8 1.8"/>
<circle cx="2959.5" cy="445.8" r="3.5" fill="#c4c4c4"/>
<circle cx="2970" cy="445.8" r="3.5" fill="#c4c4c4"/>
<circle cx="2980.5" cy="445.8" r="3.5" fill="#c4c4c4"/>
<text x="2559.6" y="566.4" font-size="25" fill="#d4d4d4" stroke="#d4d4d4" stroke-width="0.7" text-anchor="middle">?</text>
<rect x="2543.2" y="598.6" width="34" height="34" fill="#fff" stroke="#111" stroke-width="1.4"/><rect x="2552.6" y="607.4" width="16" height="15.8" fill="#323232" stroke="#111" stroke-width="1.8"/><path d="M2553 626.4H2570" stroke="#111" stroke-width="1"/><path d="M2544.6 631.4L2576.2 600" stroke="#e8311f" stroke-width="3.4"/>
<path d="M2719.8 608.4L2726.8 602.0L2733.8 608.4" fill="none" stroke="#c8c8c8" stroke-width="2" stroke-linecap="round" stroke-linejoin="round"/>
<path d="M2720.3 622.2L2726.8 628.2L2733.3 622.2" fill="none" stroke="#c8c8c8" stroke-width="1.9" stroke-linecap="round" stroke-linejoin="round"/>
<path d="M2820.1 612.1L2826.4 619.1L2832.7 612.1" fill="none" stroke="#d0d0d0" stroke-width="1.9" stroke-linecap="round" stroke-linejoin="round"/>
<rect x="2545" y="658.4" width="30.4" height="30.4" fill="#3a3a3a" stroke="#bdbdbd" stroke-width="1.5"/><rect x="2545.8" y="659.2" width="7.2" height="7.2" fill="#565656"/><rect x="2545.8" y="673.6" width="7.2" height="7.2" fill="#565656"/><rect x="2553.0" y="666.4" width="7.2" height="7.2" fill="#565656"/><rect x="2553.0" y="680.8" width="7.2" height="7.2" fill="#565656"/><rect x="2560.2" y="659.2" width="7.2" height="7.2" fill="#565656"/><rect x="2560.2" y="673.6" width="7.2" height="7.2" fill="#565656"/><rect x="2567.4" y="666.4" width="7.2" height="7.2" fill="#565656"/><rect x="2567.4" y="680.8" width="7.2" height="7.2" fill="#565656"/>
<path d="M2823.3 666.8L2830.7 673.6L2823.3 680.4" fill="none" stroke="#d0d0d0" stroke-width="2" stroke-linecap="round" stroke-linejoin="round"/>
<path d="M2558.4 750.4H2563.6L2561 753.4Z" fill="#b8b8b8"/>
<circle cx="2948.5" cy="789.8" r="3.5" fill="#c4c4c4"/>
<circle cx="2959" cy="789.8" r="3.5" fill="#c4c4c4"/>
<circle cx="2969.5" cy="789.8" r="3.5" fill="#c4c4c4"/>
<path d="M2555.4 898.2H2570.4L2576.4 904.2V918.6H2555.4Z" fill="#4b4b4b" stroke="#bdbdbd" stroke-width="1.8"/><path d="M2570 898.4V904.6H2576.4" fill="none" stroke="#bdbdbd" stroke-width="1.4"/><path d="M2554.8 890V896M2548.4 896.8H2553.6" stroke="#bdbdbd" stroke-width="1.5"/>
<path d="M2583.9 906.1L2589.4 911.9L2594.9 906.1" fill="none" stroke="#bdbdbd" stroke-width="1.8" stroke-linecap="round" stroke-linejoin="round"/>
<rect x="2623.8" y="888.5" width="1.9" height="36" fill="#bdbdbd"/><rect x="2628.6" y="893.2" width="15.2" height="11" fill="#bdbdbd"/><rect x="2628.6" y="909.2" width="25.4" height="9.6" fill="#bdbdbd"/>
<rect x="2697.9" y="888.5" width="1.9" height="36" fill="#bdbdbd"/><rect x="2690" y="893.2" width="17.7" height="11" fill="#bdbdbd"/><rect x="2686.1" y="909.2" width="26" height="9.6" fill="#bdbdbd"/>
<rect x="2773.7" y="888.5" width="1.9" height="36" fill="#bdbdbd"/><rect x="2756.6" y="893.2" width="15" height="11" fill="#bdbdbd"/><rect x="2746.1" y="909.2" width="25.4" height="9.6" fill="#bdbdbd"/>
<rect x="2802.2" y="890.8" width="35.8" height="1.9" fill="#bdbdbd"/><rect x="2807.7" y="896.6" width="10.4" height="23.4" fill="#bdbdbd"/><rect x="2822.1" y="896.6" width="11.6" height="13.8" fill="#bdbdbd"/>
<rect x="2862.2" y="904.7" width="36" height="1.9" fill="#bdbdbd"/><rect x="2867.7" y="892.6" width="10.4" height="26" fill="#bdbdbd"/><rect x="2882.1" y="896.6" width="12" height="18" fill="#bdbdbd"/>
<rect x="2922.2" y="920.5" width="35.6" height="1.9" fill="#bdbdbd"/><rect x="2927.7" y="892.6" width="10" height="26" fill="#bdbdbd"/><rect x="2941.6" y="902" width="12.4" height="16.6" fill="#bdbdbd"/>
<circle cx="2959.5" cy="958.4" r="3.5" fill="#c4c4c4"/>
<circle cx="2970" cy="958.4" r="3.5" fill="#c4c4c4"/>
<circle cx="2980.5" cy="958.4" r="3.5" fill="#c4c4c4"/>
<path d="M2846.3 1069.8L2852.6 1076.7L2858.9 1069.8" fill="none" stroke="#d0d0d0" stroke-width="1.9" stroke-linecap="round" stroke-linejoin="round"/>
<rect x="2900.9" y="1058" width="30.2" height="30.2" fill="none" stroke="#bdbdbd" stroke-width="1.7"/><rect x="2900.1" y="1057.2" width="31.8" height="9" fill="#bdbdbd"/><rect x="2905.4" y="1071.6" width="3.6" height="3.4" fill="#bdbdbd"/><rect x="2905.4" y="1079.4" width="3.6" height="3.4" fill="#bdbdbd"/><path d="M2912 1073.4H2926.6M2912 1081.2H2926.6" stroke="#bdbdbd" stroke-width="1.7"/>
</svg>
<!-- tracepanel -->
<div style="left:94.5px;top:172px;width:233.6px;height:108.8px;background:#323232;border-radius:6px 9px 0 0;box-shadow:1px 4px 9px rgba(0,0,0,.45);border:1.5px solid #212121;"></div>
<div style="left:94.5px;top:172px;width:233.6px;height:28px;background:#252525;border-radius:6px 9px 0 0;"></div>
<div style="left:94.5px;top:198.6px;width:233.6px;height:1.6px;background:#222222;"></div>
<div style="left:192px;top:206px;width:2.1px;height:8px;background:#1f1f1f;"></div>
<div style="left:196px;top:206px;width:2.1px;height:8px;background:#1f1f1f;"></div>
<div style="left:200px;top:206px;width:2.1px;height:8px;background:#1f1f1f;"></div>
<div style="left:204px;top:206px;width:2.1px;height:8px;background:#1f1f1f;"></div>
<div style="left:208px;top:206px;width:2.1px;height:8px;background:#1f1f1f;"></div>
<div style="left:212px;top:206px;width:2.1px;height:8px;background:#1f1f1f;"></div>
<div style="left:216px;top:206px;width:2.1px;height:8px;background:#1f1f1f;"></div>
<div style="left:220px;top:206px;width:2.1px;height:8px;background:#1f1f1f;"></div>
<div style="left:224px;top:206px;width:2.1px;height:8px;background:#1f1f1f;"></div>
<div style="left:228px;top:206px;width:2.1px;height:8px;background:#1f1f1f;"></div>
<div style="left:105.1px;top:222.5px;width:211.6px;height:47px;background:#1e1e1e;border:1.4px solid #3e3e3e;border-radius:5px;"></div>
<span style="left:170.90px;top:237.00px;font-size:22px;line-height:22px;color:#ececec;font-weight:700;letter-spacing:-0.199px;">Image Trace</span>
<div style="left:328px;top:194px;width:562px;height:1493.5px;background:#323232;box-shadow:6px 1px 7px -1px rgba(0,0,0,.45);"></div>
<div style="left:328px;top:194px;width:562px;height:61.5px;background:#252525;"></div>
<div style="left:328px;top:194px;width:562px;height:8px;background:#1f1f1f;"></div>
<div style="left:328px;top:194px;width:1.8px;height:1493.5px;background:#232323;"></div>
<div style="left:888.4px;top:194px;width:1.6px;height:1493.5px;background:#252525;"></div>
<div style="left:330px;top:202px;width:160.3px;height:54px;background:#323232;"></div>
<span style="left:348.30px;top:216.00px;font-size:22px;line-height:22px;color:#ececec;font-weight:700;letter-spacing:-0.181px;">Image Trace</span>
<div style="left:350px;top:341px;width:518px;height:1.6px;background:#2a2a2a;"></div>
<div style="left:460px;top:356px;width:349.5px;height:41.5px;background:#262626;border:1.3px solid #444444;border-radius:5px;"></div>
<span style="left:388.60px;top:367.00px;font-size:22px;line-height:22px;color:#a9a9a9;-webkit-text-stroke:0.4px;letter-spacing:-0.757px;">Preset:</span>
<span style="left:470.30px;top:367.00px;font-size:22px;line-height:22px;color:#e2e2e2;-webkit-text-stroke:0.4px;letter-spacing:-0.400px;">Custom</span>
<div style="left:460px;top:414.8px;width:349.5px;height:40.4px;background:#262626;border:1.3px solid #444444;border-radius:5px;"></div>
<span style="left:402.40px;top:424.00px;font-size:22px;line-height:22px;color:#a9a9a9;-webkit-text-stroke:0.4px;letter-spacing:-0.560px;">View:</span>
<span style="left:474.20px;top:424.00px;font-size:22px;line-height:22px;color:#e2e2e2;-webkit-text-stroke:0.4px;letter-spacing:-0.208px;">Tracing Result</span>
<div style="left:460px;top:470.6px;width:349.5px;height:40.8px;background:#262626;border:1.3px solid #444444;border-radius:5px;"></div>
<span style="left:394.30px;top:481.00px;font-size:22px;line-height:22px;color:#a9a9a9;-webkit-text-stroke:0.4px;letter-spacing:-0.489px;">Mode:</span>
<span style="left:474.20px;top:481.00px;font-size:22px;line-height:22px;color:#e2e2e2;-webkit-text-stroke:0.4px;letter-spacing:-0.471px;">Black and White</span>
<div style="left:460px;top:522.3px;width:349.5px;height:41.4px;background:#393939;border-radius:6px;"></div>
<span style="left:383.30px;top:533.00px;font-size:22px;line-height:22px;color:#6c6c6c;-webkit-text-stroke:0.4px;letter-spacing:-0.613px;">Palette:</span>
<span style="left:474.70px;top:533.00px;font-size:22px;line-height:22px;color:#6c6c6c;-webkit-text-stroke:0.4px;letter-spacing:-0.103px;">Limited</span>
<div style="left:831.6px;top:370.5px;width:2.2px;height:2.2px;background:#c4c4c4;"></div>
<div style="left:837.5px;top:370.5px;width:18.8px;height:2.2px;background:#c4c4c4;"></div>
<div style="left:831.6px;top:376.9px;width:2.2px;height:2.2px;background:#c4c4c4;"></div>
<div style="left:837.5px;top:376.9px;width:18.8px;height:2.2px;background:#c4c4c4;"></div>
<div style="left:831.6px;top:383.3px;width:2.2px;height:2.2px;background:#c4c4c4;"></div>
<div style="left:837.5px;top:383.3px;width:18.8px;height:2.2px;background:#c4c4c4;"></div>
<span style="left:350.60px;top:584.00px;font-size:22px;line-height:22px;color:#a9a9a9;-webkit-text-stroke:0.4px;letter-spacing:-0.154px;">Threshold:</span>
<div style="left:462px;top:591.7px;width:217.6px;height:4.4px;background:#5a5a5a;border-radius:2px;"></div>
<div style="left:712px;top:591.7px;width:48px;height:4.4px;background:#5a5a5a;border-radius:2px;"></div>
<div style="left:772.7px;top:574.8px;width:84.4px;height:38px;background:#242424;border:1.3px solid #424242;border-radius:5px;"></div>
<span style="left:783.20px;top:582.00px;font-size:22px;line-height:22px;color:#e2e2e2;-webkit-text-stroke:0.4px;letter-spacing:-0.336px;">205</span>
<span style="left:460.40px;top:616.00px;font-size:22px;line-height:22px;color:#a9a9a9;-webkit-text-stroke:0.4px;letter-spacing:-1.368px;">Less</span>
<span style="left:713.00px;top:616.00px;font-size:22px;line-height:22px;color:#a9a9a9;-webkit-text-stroke:0.4px;letter-spacing:-0.706px;">More</span>
<span style="left:392.00px;top:659.00px;font-size:22px;line-height:22px;color:#b8b8b8;-webkit-text-stroke:0.4px;letter-spacing:-0.582px;">Advanced</span>
<div style="left:488px;top:667.2px;width:380px;height:1.6px;background:#2a2a2a;"></div>
<span style="left:395.50px;top:711.00px;font-size:22px;line-height:22px;color:#a9a9a9;-webkit-text-stroke:0.4px;letter-spacing:-0.812px;">Paths:</span>
<div style="left:462px;top:718.1px;width:271.7px;height:4.4px;background:#5a5a5a;border-radius:2px;"></div>
<div style="left:772.7px;top:701px;width:84.4px;height:38.4px;background:#242424;border:1.3px solid #424242;border-radius:5px;"></div>
<span style="left:783.20px;top:708.00px;font-size:22px;line-height:22px;color:#e2e2e2;-webkit-text-stroke:0.4px;letter-spacing:-1.567px;">100%</span>
<span style="left:460.40px;top:742.00px;font-size:22px;line-height:22px;color:#a9a9a9;-webkit-text-stroke:0.4px;letter-spacing:-0.953px;">Low</span>
<span style="left:716.60px;top:742.00px;font-size:22px;line-height:22px;color:#a9a9a9;-webkit-text-stroke:0.4px;letter-spacing:-0.387px;">High</span>
<span style="left:371.10px;top:785.00px;font-size:22px;line-height:22px;color:#a9a9a9;-webkit-text-stroke:0.4px;letter-spacing:-0.308px;">Corners:</span>
<div style="left:462px;top:791.7px;width:271.7px;height:4.4px;background:#5a5a5a;border-radius:2px;"></div>
<div style="left:772.7px;top:775px;width:84.4px;height:38px;background:#242424;border:1.3px solid #424242;border-radius:5px;"></div>
<span style="left:783.20px;top:782.00px;font-size:22px;line-height:22px;color:#e2e2e2;-webkit-text-stroke:0.4px;letter-spacing:-1.567px;">100%</span>
<span style="left:460.40px;top:816.00px;font-size:22px;line-height:22px;color:#a9a9a9;-webkit-text-stroke:0.4px;letter-spacing:-1.368px;">Less</span>
<span style="left:713.00px;top:816.00px;font-size:22px;line-height:22px;color:#a9a9a9;-webkit-text-stroke:0.4px;letter-spacing:-0.706px;">More</span>
<span style="left:393.60px;top:859.00px;font-size:22px;line-height:22px;color:#a9a9a9;-webkit-text-stroke:0.4px;letter-spacing:-0.493px;">Noise:</span>
<div style="left:488.1px;top:865.8px;width:271.9px;height:4.4px;background:#5a5a5a;border-radius:2px;"></div>
<div style="left:772.7px;top:849px;width:84.4px;height:37.8px;background:#242424;border:1.3px solid #424242;border-radius:5px;"></div>
<span style="left:783.20px;top:856.00px;font-size:22px;line-height:22px;color:#e2e2e2;-webkit-text-stroke:0.4px;letter-spacing:-0.021px;">1 px</span>
<span style="left:462.00px;top:890.00px;font-size:22px;line-height:22px;color:#a9a9a9;-webkit-text-stroke:0.4px;">1</span>
<span style="left:725.80px;top:890.00px;font-size:22px;line-height:22px;color:#a9a9a9;-webkit-text-stroke:0.4px;letter-spacing:-0.736px;">100</span>
<span style="left:374.80px;top:932.00px;font-size:22px;line-height:22px;color:#a9a9a9;-webkit-text-stroke:0.4px;letter-spacing:-0.185px;">Method:</span>
<div style="left:460.4px;top:922.5px;width:97.2px;height:46.8px;background:#323232;border:1.3px solid #444;border-radius:5px;"></div>
<div style="left:461.8px;top:923.9px;width:45.2px;height:44px;background:#1c1c1c;border-radius:4px 0 0 4px;"></div>
<div style="left:507.6px;top:923.9px;width:1.3px;height:44px;background:#444;"></div>
<div style="left:469.8px;top:932px;width:24.2px;height:28px;background:#ffffff;"></div>
<div style="left:520px;top:932px;width:24px;height:28px;background:#b4b4b4;"></div>
<span style="left:372.50px;top:985.00px;font-size:22px;line-height:22px;color:#b4b4b4;-webkit-text-stroke:0.4px;letter-spacing:-0.772px;">Create</span>
<div style="left:446px;top:993.2px;width:411.5px;height:1.6px;background:#2a2a2a;"></div>
<div style="left:374px;top:1027.9px;width:23.8px;height:23.8px;background:#a2a2a2;border-radius:4.5px;"></div>
<span style="left:408.60px;top:1030.00px;font-size:22px;line-height:22px;color:#e2e2e2;-webkit-text-stroke:0.4px;letter-spacing:-0.461px;">Fills</span>
<div style="left:460px;top:1027.9px;width:23.8px;height:23.8px;background:#a2a2a2;border-radius:4.5px;"></div>
<span style="left:494.20px;top:1030.00px;font-size:22px;line-height:22px;color:#e2e2e2;-webkit-text-stroke:0.4px;letter-spacing:-0.598px;">Strokes</span>
<div style="left:576.6px;top:1020.6px;width:154.8px;height:40.3px;background:#242424;border:1.3px solid #444;border-radius:5px;"></div>
<div style="left:578px;top:1022px;width:34px;height:37.6px;background:#2d2d2d;border-radius:4px 0 0 4px;"></div>
<div style="left:612px;top:1022px;width:1.3px;height:37.6px;background:#444;"></div>
<span style="left:622.00px;top:1030.00px;font-size:22px;line-height:22px;color:#e2e2e2;-webkit-text-stroke:0.4px;letter-spacing:-0.044px;">10 px</span>
<div style="left:374px;top:1074.3px;width:23.8px;height:23.8px;background:transparent;border:1.7px solid #505050;border-radius:4.5px;"></div>
<span style="left:408.60px;top:1076.00px;font-size:22px;line-height:22px;color:#6c6c6c;-webkit-text-stroke:0.4px;letter-spacing:-0.442px;">Gradients</span>
<span style="left:373.60px;top:1123.00px;font-size:22px;line-height:22px;color:#6c6c6c;-webkit-text-stroke:0.4px;letter-spacing:-0.362px;">Smooth:</span>
<div style="left:488.1px;top:1129.8px;width:269.9px;height:4.4px;background:#454545;border-radius:2px;"></div>
<div style="left:770.4px;top:1112.4px;width:86px;height:39.2px;background:#393939;border-radius:6px;"></div>
<span style="left:782.60px;top:1120.00px;font-size:22px;line-height:22px;color:#5a5a5a;-webkit-text-stroke:0.4px;letter-spacing:-4.198px;">1%</span>
<span style="left:460.90px;top:1154.00px;font-size:22px;line-height:22px;color:#6c6c6c;-webkit-text-stroke:0.4px;letter-spacing:-0.717px;">Min</span>
<span style="left:719.50px;top:1154.00px;font-size:22px;line-height:22px;color:#6c6c6c;-webkit-text-stroke:0.4px;letter-spacing:-1.354px;">Max</span>
<div style="left:374px;top:1188.3px;width:23.8px;height:23.8px;background:transparent;border:1.7px solid #9c9c9c;border-radius:4.5px;"></div>
<span style="left:408.60px;top:1190.00px;font-size:22px;line-height:22px;color:#e2e2e2;-webkit-text-stroke:0.4px;letter-spacing:-1.420px;">Shapes</span>
<span style="left:372.50px;top:1230.00px;font-size:22px;line-height:22px;color:#b4b4b4;-webkit-text-stroke:0.4px;letter-spacing:-0.188px;">Options</span>
<div style="left:460.4px;top:1239px;width:397.1px;height:1.6px;background:#2a2a2a;"></div>
<div style="left:374px;top:1268px;width:23.8px;height:23.8px;background:#a2a2a2;border-radius:4.5px;"></div>
<span style="left:408.60px;top:1270.00px;font-size:22px;line-height:22px;color:#e2e2e2;-webkit-text-stroke:0.4px;letter-spacing:-0.477px;">Snap Curves To Lines</span>
<div style="left:374px;top:1308.2px;width:23.8px;height:23.8px;background:transparent;border:1.7px solid #505050;border-radius:4.5px;"></div>
<span style="left:408.60px;top:1310.00px;font-size:22px;line-height:22px;color:#6c6c6c;-webkit-text-stroke:0.4px;letter-spacing:-0.341px;">Transparency</span>
<div style="left:374px;top:1348px;width:23.8px;height:23.8px;background:#a2a2a2;border-radius:4.5px;"></div>
<span style="left:408.60px;top:1350.00px;font-size:22px;line-height:22px;color:#e2e2e2;-webkit-text-stroke:0.4px;letter-spacing:-0.081px;">Ignore Color</span>
<div style="left:550.2px;top:1344px;width:66px;height:35.8px;background:#ffffff;"></div>
<div style="left:350px;top:1398.9px;width:518px;height:1.6px;background:#2a2a2a;"></div>
<span style="left:372.50px;top:1425.00px;font-size:22px;line-height:22px;color:#b4b4b4;-webkit-text-stroke:0.4px;letter-spacing:-0.181px;">Info:</span>
<span style="left:463.80px;top:1425.00px;font-size:22px;line-height:22px;color:#b4b4b4;-webkit-text-stroke:0.4px;letter-spacing:-1.036px;">19</span>
<span style="left:608.80px;top:1425.00px;font-size:22px;line-height:22px;color:#b4b4b4;-webkit-text-stroke:0.4px;letter-spacing:-0.502px;">603</span>
<span style="left:756.10px;top:1425.00px;font-size:22px;line-height:22px;color:#b4b4b4;-webkit-text-stroke:0.4px;">1</span>
<div style="left:350px;top:1471.3px;width:518px;height:1.6px;background:#2a2a2a;"></div>
<div style="left:374px;top:1490.2px;width:23.8px;height:23.8px;background:transparent;border:1.7px solid #9c9c9c;border-radius:4.5px;"></div>
<span style="left:408.60px;top:1492.00px;font-size:22px;line-height:22px;color:#e2e2e2;-webkit-text-stroke:0.4px;letter-spacing:-0.075px;">Auto Grouping</span>
<div style="left:578.2px;top:1484.2px;width:279.7px;height:37.6px;background:transparent;border:2px solid #646464;border-radius:5px;"></div>
<span style="left:683.05px;top:1492.00px;font-size:22px;line-height:22px;color:#e6e6e6;-webkit-text-stroke:0.4px;letter-spacing:-0.820px;">Expand</span>
<div style="left:350px;top:1533.3px;width:518px;height:1.6px;background:#2a2a2a;"></div>
<div style="left:374px;top:1552px;width:23.8px;height:23.8px;background:#a2a2a2;border-radius:4.5px;"></div>
<span style="left:408.60px;top:1554.00px;font-size:22px;line-height:22px;color:#e2e2e2;-webkit-text-stroke:0.4px;letter-spacing:-0.893px;">Preview</span>
<div style="left:578.2px;top:1546.3px;width:279.7px;height:38px;background:#393939;border-radius:6px;"></div>
<span style="left:691.70px;top:1555.00px;font-size:22px;line-height:22px;color:#686868;-webkit-text-stroke:0.4px;letter-spacing:-0.724px;">Trace</span>
<div style="left:350px;top:1595.4px;width:518px;height:1.6px;background:#2a2a2a;"></div>
<div style="left:328px;top:1670px;width:562px;height:17.5px;background:#2b2b2b;"></div>
<div style="left:328px;top:1670px;width:562px;height:4px;background:#1f1f1f;"></div>
<div style="left:590.4px;top:1674.6px;width:2.1px;height:7.4px;background:#1a1a1a;"></div>
<div style="left:594.4px;top:1674.6px;width:2.1px;height:7.4px;background:#1a1a1a;"></div>
<div style="left:598.4px;top:1674.6px;width:2.1px;height:7.4px;background:#1a1a1a;"></div>
<div style="left:602.4px;top:1674.6px;width:2.1px;height:7.4px;background:#1a1a1a;"></div>
<div style="left:606.4px;top:1674.6px;width:2.1px;height:7.4px;background:#1a1a1a;"></div>
<div style="left:610.4px;top:1674.6px;width:2.1px;height:7.4px;background:#1a1a1a;"></div>
<div style="left:614.4px;top:1674.6px;width:2.1px;height:7.4px;background:#1a1a1a;"></div>
<div style="left:618.4px;top:1674.6px;width:2.1px;height:7.4px;background:#1a1a1a;"></div>
<div style="left:622.4px;top:1674.6px;width:2.1px;height:7.4px;background:#1a1a1a;"></div>
<div style="left:626.4px;top:1674.6px;width:2.1px;height:7.4px;background:#1a1a1a;"></div>
<svg width="3024" height="1780" viewBox="0 0 3024 1780" style="left:0;top:0;">
<path d="M106.6 182.8L117.6 193.6M117.6 182.8L106.6 193.6" stroke="#9c9c9c" stroke-width="2.2" fill="none"/>
<path d="M298.6 183.3L303.0 187.3L298.6 191.3" fill="none" stroke="#9a9a9a" stroke-width="1.4" stroke-linecap="round" stroke-linejoin="round"/>
<path d="M306.6 183.3L311.0 187.3L306.6 191.3" fill="none" stroke="#9a9a9a" stroke-width="1.4" stroke-linecap="round" stroke-linejoin="round"/>
<g transform="translate(133.2,247.5)"><circle cx="-2.5" cy="-0.2" r="13.9" fill="#bdbdbd"/><path d="M0 -16.4A16.4 16.4 0 0 1 0 16.4" fill="none" stroke="#1e1e1e" stroke-width="5.4"/><path d="M0 -16.4A16.4 16.4 0 0 1 0 16.4" fill="none" stroke="#bdbdbd" stroke-width="1.6"/><g fill="#bdbdbd" stroke="#1e1e1e" stroke-width="2.4" paint-order="stroke"><rect x="-3" y="-19.5" width="6" height="6" rx="0.8"/><rect x="12.8" y="-2.6" width="6" height="6" rx="0.8"/><rect x="-3" y="13.5" width="6" height="6" rx="0.8"/></g></g>
<path d="M863.6 223.5L858.0 229.2L863.6 234.9" fill="none" stroke="#a0a0a0" stroke-width="1.5" stroke-linecap="round" stroke-linejoin="round"/>
<path d="M873.2 223.5L867.6 229.2L873.2 234.9" fill="none" stroke="#a0a0a0" stroke-width="1.5" stroke-linecap="round" stroke-linejoin="round"/>
<g transform="translate(465.6,303.6)"><circle cx="0.4" cy="-1" r="10.4" fill="#bdbdbd"/><circle cx="-10.4" cy="9" r="10" fill="#323232"/><path d="M-12.4 -3.2L-4.6 -12.6L-3 -3.4Z" fill="#bdbdbd"/><path d="M0 -13.3A13.3 13.3 0 0 1 0 13.3" fill="none" stroke="#323232" stroke-width="4.6"/><path d="M0 -13.3A13.3 13.3 0 0 1 0 13.3" fill="none" stroke="#bdbdbd" stroke-width="1.7"/><g fill="#bdbdbd"><rect x="-1.8" y="-15.4" width="4.2" height="4" rx="0.6"/><rect x="11.4" y="-2" width="3.6" height="4.2" rx="0.6"/><rect x="-1.8" y="11.4" width="4.2" height="4" rx="0.6"/></g><circle cx="-9.7" cy="8.5" r="3.3" fill="none" stroke="#bdbdbd" stroke-width="1.5"/><path d="M-9.7 1V3.6M-9.7 13.4V16M-17.2 8.5H-14.6M-4.8 8.5H-2.2M-15 3.2L-13.2 5M-6.2 12L-4.4 13.8M-15 13.8L-13.2 12M-6.2 5L-4.4 3.2" stroke="#bdbdbd" stroke-width="1.5"/></g>
<g transform="translate(522,304.3)"><path d="M-14.3 -8H-7.5L-5 -12H5L7.5 -8H14.3V9.8H-14.3Z" fill="#bdbdbd"/><circle cx="0" cy="0.6" r="6" fill="#323232"/><circle cx="0" cy="0.6" r="3.5" fill="#bdbdbd"/></g>
<g transform="translate(579.9,304.3)"><rect x="-13.2" y="-13.2" width="26.4" height="26.4" fill="none" stroke="#bdbdbd" stroke-width="1.8"/><rect x="-12" y="-12" width="8.6" height="8.6" fill="#323232"/><rect x="-1.6" y="-12" width="8.2" height="8.2" fill="#5e5e5e" stroke="#bdbdbd" stroke-width="1.5"/><rect x="-12" y="-2.4" width="8.8" height="8.4" fill="#8a8a8a"/><path d="M-2.4 -13V6.8H-13" fill="none" stroke="#bdbdbd" stroke-width="1.6"/></g>
<defs><linearGradient id="tg1" x1="0" x2="1" y1="0" y2="0"><stop offset="0" stop-color="#2a2a2a"/><stop offset="1" stop-color="#e0e0e0"/></linearGradient></defs><rect x="624.8" y="291.1" width="26.4" height="26.4" fill="url(#tg1)" stroke="#bdbdbd" stroke-width="1.8"/>
<rect x="682.8" y="291.1" width="26.4" height="26.4" fill="none" stroke="#bdbdbd" stroke-width="1.8"/><rect x="682" y="290.2" width="14" height="28.2" fill="#bdbdbd"/>
<path d="M741 291.2H758.6V298.6A9.6 9.6 0 1 1 748.4 308.4H741Z" fill="none" stroke="#bdbdbd" stroke-width="1.8"/>
<path d="M784.3 373.9L790.8 381.2L797.2 373.9" fill="none" stroke="#d2d2d2" stroke-width="1.9" stroke-linecap="round" stroke-linejoin="round"/>
<path d="M784.3 432.2L790.8 439.4L797.2 432.2" fill="none" stroke="#d2d2d2" stroke-width="1.9" stroke-linecap="round" stroke-linejoin="round"/>
<path d="M784.3 488.2L790.8 495.4L797.2 488.2" fill="none" stroke="#d2d2d2" stroke-width="1.9" stroke-linecap="round" stroke-linejoin="round"/>
<path d="M784.3 540.1L790.8 547.4L797.2 540.1" fill="none" stroke="#565656" stroke-width="1.9" stroke-linecap="round" stroke-linejoin="round"/>
<g transform="translate(842.8,436.4)"><path d="M-13 0C-8 -7.6 -3.5 -8.8 0 -8.8C3.5 -8.8 8 -7.6 13 0C8 7.6 3.5 8.8 0 8.8C-3.5 8.8 -8 7.6 -13 0Z" fill="#c4c4c4"/><circle cx="0" cy="0" r="5.6" fill="#323232"/><circle cx="0.3" cy="0" r="3.4" fill="#c4c4c4"/><circle cx="-1.2" cy="-1.6" r="1.6" fill="#323232"/></g>
<circle cx="695.8" cy="593.9" r="10.7" fill="none" stroke="#a3a3a3" stroke-width="3"/>
<path d="M359.6 665.8L382.1 665.8L370.8 677.3Z" fill="#b4b4b4"/>
<circle cx="749.9" cy="720.3" r="10.7" fill="none" stroke="#a3a3a3" stroke-width="3"/>
<circle cx="749.9" cy="793.9" r="10.7" fill="none" stroke="#a3a3a3" stroke-width="3"/>
<circle cx="471.9" cy="868" r="10.7" fill="none" stroke="#a3a3a3" stroke-width="3"/>
<circle cx="481.6" cy="946.3" r="7.8" fill="#1c1c1c"/><circle cx="489.9" cy="946.3" r="9" fill="#707070" stroke="#fff" stroke-width="1.6"/>
<circle cx="540.3" cy="946.3" r="9" fill="#555" stroke="#b4b4b4" stroke-width="1.6"/>
<path d="M379.6 1040.1L384.3 1044.9L392.6 1035.1" fill="none" stroke="#2c2c2c" stroke-width="3" stroke-linecap="butt" stroke-linejoin="miter"/>
<path d="M465.6 1040.1L470.3 1044.9L478.6 1035.1" fill="none" stroke="#2c2c2c" stroke-width="3" stroke-linecap="butt" stroke-linejoin="miter"/>
<path d="M588.0 1034.7L595.0 1028.2L602.0 1034.7" fill="none" stroke="#c8c8c8" stroke-width="2" stroke-linecap="round" stroke-linejoin="round"/>
<path d="M589.3 1048.4L595.0 1053.6L600.7 1048.4" fill="none" stroke="#c8c8c8" stroke-width="1.9" stroke-linecap="round" stroke-linejoin="round"/>
<circle cx="471.9" cy="1132" r="10.7" fill="none" stroke="#555555" stroke-width="3"/>
<path d="M379.6 1280.2L384.3 1285.0L392.6 1275.2" fill="none" stroke="#2c2c2c" stroke-width="3" stroke-linecap="butt" stroke-linejoin="miter"/>
<path d="M379.6 1360.2L384.3 1365.0L392.6 1355.2" fill="none" stroke="#2c2c2c" stroke-width="3" stroke-linecap="butt" stroke-linejoin="miter"/>
<g transform="translate(655.6,1362.3) rotate(45)"><rect x="-4.1" y="-6" width="8.2" height="24" rx="4" fill="none" stroke="#c4c4c4" stroke-width="2"/><rect x="-7.2" y="-11.5" width="14.4" height="6.2" rx="1" fill="#c4c4c4"/><rect x="-4.6" y="-22" width="9.2" height="12" rx="4.4" fill="#c4c4c4"/></g>
<g fill="#b4b4b4" stroke="none"><rect x="430" y="1424" width="6" height="6" rx="1"/><rect x="448.2" y="1442" width="6" height="6" rx="1"/><path d="M435 1427C445 1427.5 451 1434 451.5 1443" fill="none" stroke="#b4b4b4" stroke-width="2"/></g>
<g><rect x="588.6" y="1428" width="7" height="7" rx="1" fill="#b4b4b4"/><path d="M576 1427.8C583 1428 588 1429.5 592 1432C595 1436 596 1442 596.3 1448" fill="none" stroke="#b4b4b4" stroke-width="2"/></g>
<g><rect x="724.7" y="1427" width="20.4" height="20.4" fill="#555" stroke="#b4b4b4" stroke-width="1.7"/><rect x="726" y="1428.3" width="8.4" height="8.4" fill="#6e6e6e"/><rect x="735.6" y="1437.9" width="8.4" height="8.4" fill="#6e6e6e"/><rect x="735.6" y="1428.3" width="8.4" height="8.4" fill="#4a4a4a"/><rect x="726" y="1437.9" width="8.4" height="8.4" fill="#323232"/><path d="M735 1427V1447.4M724.7 1437.2H745.1" stroke="#b4b4b4" stroke-width="1.7"/></g>
<path d="M379.6 1564.2L384.3 1569.0L392.6 1559.2" fill="none" stroke="#2c2c2c" stroke-width="3" stroke-linecap="butt" stroke-linejoin="miter"/>
<circle cx="384" cy="1628" r="10.8" fill="none" stroke="#c4c4c4" stroke-width="1.7"/><circle cx="384" cy="1622.6" r="1.7" fill="#c4c4c4"/><path d="M381.6 1625.8H385.2V1633.2M381.4 1633.4H387" stroke="#c4c4c4" stroke-width="1.9" fill="none"/>
<path d="M418.5 1618.2H436C437.3 1618.2 438.3 1619.2 438.3 1620.5V1631.7C438.3 1633 437.3 1634 436 1634H427L420.6 1640.6V1634H418.5C417.2 1634 416.2 1633 416.2 1631.7V1620.5C416.2 1619.2 417.2 1618.2 418.5 1618.2Z" fill="#c4c4c4"/><circle cx="420.9" cy="1625.6" r="1.6" fill="#323232"/><circle cx="427.3" cy="1625.6" r="1.6" fill="#323232"/><circle cx="433.7" cy="1625.6" r="1.6" fill="#323232"/>
</svg>
<!-- bottombar -->
<div style="left:155.5px;top:1743px;width:137px;height:36px;background:#272727;border:1.3px solid #3d3d3d;border-bottom:none;border-radius:5px 5px 0 0;"></div>
<div style="left:256.6px;top:1744.3px;width:1.3px;height:34px;background:#3d3d3d;"></div>
<div style="left:257.9px;top:1744.3px;width:33.3px;height:34px;background:#2f2f2f;border-radius:0 4px 0 0;"></div>
<span style="left:163.20px;top:1752.00px;font-size:22px;line-height:22px;color:#d8d8d8;-webkit-text-stroke:0.4px;letter-spacing:-1.003px;">82.93%</span>
<div style="left:301.4px;top:1743px;width:137.4px;height:36px;background:#272727;border:1.3px solid #3d3d3d;border-bottom:none;border-radius:5px 5px 0 0;"></div>
<div style="left:402.6px;top:1744.3px;width:1.3px;height:34px;background:#3d3d3d;"></div>
<div style="left:403.9px;top:1744.3px;width:33.6px;height:34px;background:#2f2f2f;border-radius:0 4px 0 0;"></div>
<span style="left:308.60px;top:1752.00px;font-size:22px;line-height:22px;color:#d8d8d8;-webkit-text-stroke:0.4px;">0°</span>
<div style="left:521px;top:1743px;width:117.8px;height:36px;background:#272727;border:1.3px solid #3d3d3d;border-bottom:none;border-radius:5px 5px 0 0;"></div>
<div style="left:602.4px;top:1744.3px;width:1.3px;height:34px;background:#3d3d3d;"></div>
<div style="left:603.7px;top:1744.3px;width:33.8px;height:34px;background:#2f2f2f;border-radius:0 4px 0 0;"></div>
<span style="left:530.20px;top:1752.00px;font-size:22px;line-height:22px;color:#d8d8d8;-webkit-text-stroke:0.4px;">1</span>
<div style="left:721.6px;top:1745px;width:1.6px;height:30px;background:#2a2a2a;"></div>
<span style="left:841.40px;top:1751.00px;font-size:22px;line-height:22px;color:#b8b8b8;-webkit-text-stroke:0.4px;letter-spacing:-0.028px;">Toggle Selection</span>
<div style="left:1157.6px;top:1742px;width:1146.4px;height:33px;background:#2a2a2a;"></div>
<div style="left:1122px;top:1745px;width:1.4px;height:30px;background:#2a2a2a;"></div>
<div style="left:1790.4px;top:1743.6px;width:49.8px;height:30.2px;background:#3b3b3b;border-radius:15px;"></div>
<div style="left:0px;top:1773.8px;width:3024px;height:2px;background:#1c1c1c;"></div>
<div style="left:0px;top:1775.6px;width:3024px;height:4.4px;background:linear-gradient(90deg,#5a2a10 0,#120a06 4%,#050505 12%,#050505 88%,#1a0e08 96%,#4a2410 100%);"></div>
<div style="left:3022px;top:12px;width:2px;height:1762px;background:#1c1c1c;"></div>
<svg width="3024" height="1780" viewBox="0 0 3024 1780" style="left:0;top:0;">
<circle cx="172" cy="1716.4" r="13.8" fill="#c2c2c2"/>
<text x="172" y="1724.6" font-size="23" font-weight="700" fill="#323232" text-anchor="middle">?</text>
<path d="M268.5 1759.7L274.9 1766.8L281.4 1759.7" fill="none" stroke="#d0d0d0" stroke-width="1.9" stroke-linecap="round" stroke-linejoin="round"/>
<path d="M414.7 1759.7L421.1 1766.8L427.6 1759.7" fill="none" stroke="#d0d0d0" stroke-width="1.9" stroke-linecap="round" stroke-linejoin="round"/>
<path d="M614.5 1759.7L621.0 1766.8L627.4 1759.7" fill="none" stroke="#d0d0d0" stroke-width="1.9" stroke-linecap="round" stroke-linejoin="round"/>
<path d="M455.6 1752.2H459.4V1768.6H455.6Z M472.2 1752.2V1768.6L461 1760.4Z" fill="#5e5e5e"/>
<path d="M502.6 1752.2V1768.6L492 1760.4Z" fill="#5e5e5e"/>
<path d="M658.6 1752.2V1768.6L668.4 1760.4Z" fill="#5e5e5e"/>
<path d="M687.6 1752.2V1768.6L698.8 1760.4Z M700.6 1752.2H704.4V1768.6H700.6Z" fill="#5e5e5e"/>
<path d="M1135 1753V1767.6L1144.6 1760.3Z" fill="#c4c4c4"/>
<path d="M1177.6 1752.1L1171.2 1758.6L1177.6 1765.1" fill="none" stroke="#8a8a8a" stroke-width="1.7" stroke-linecap="round" stroke-linejoin="round"/>
<path d="M2283.2 1752.1L2289.6 1758.6L2283.2 1765.1" fill="none" stroke="#8a8a8a" stroke-width="1.7" stroke-linecap="round" stroke-linejoin="round"/>
<path d="M2313.6 150.1L2320.6 143.1L2327.6 150.1" fill="none" stroke="#8a8a8a" stroke-width="1.7" stroke-linecap="round" stroke-linejoin="round"/>
<path d="M2314.1 1721.8L2320.6 1728.2L2327.1 1721.8" fill="none" stroke="#8a8a8a" stroke-width="1.7" stroke-linecap="round" stroke-linejoin="round"/>
</svg>
<!-- topicons -->

<svg width="3024" height="1780" viewBox="0 0 3024 1780" style="left:0;top:0;">
<path d="M170 21L188.2 39.2L184.2 42V52.2H174V40H166V52.2H155.6V42L151.6 39.2Z" fill="#c0c0c0"/>
<path d="M164.4 94.4L175.2 105.4M175.2 94.4L164.4 105.4" stroke="#e0e0e0" stroke-width="2.3" fill="none"/>
<path d="M2764 21.8C2758.6 21.8 2756.2 26.4 2756 31.6C2755.8 37.4 2754.6 40.4 2751.8 43.2V44.6H2776.2V43.2C2773.4 40.4 2772.2 37.4 2772 31.6C2771.8 26.4 2769.4 21.8 2764 21.8Z" fill="#c0c0c0"/><path d="M2760 46.4H2768A4 4 0 0 1 2760 46.4Z" fill="#c0c0c0"/>
<circle cx="2774.8" cy="25" r="8.3" fill="#323232"/><circle cx="2774.8" cy="25" r="7.1" fill="#4a8fea"/>
<circle cx="2825.2" cy="33.6" r="12" fill="none" stroke="#c0c0c0" stroke-width="3.6"/><path d="M2834.2 42.4L2842 50" stroke="#c0c0c0" stroke-width="4.2" stroke-linecap="round"/>
<rect x="2902.2" y="25.8" width="15.4" height="22.2" fill="#c0c0c0"/><rect x="2919.8" y="25.8" width="16.4" height="10.6" fill="#c0c0c0"/><rect x="2919.8" y="38.4" width="16.4" height="9.6" fill="#c0c0c0"/>
<rect x="2973" y="25.1" width="30.2" height="23.8" fill="none" stroke="#c0c0c0" stroke-width="2"/><rect x="2976.6" y="30.6" width="5.6" height="13.2" fill="none" stroke="#c0c0c0" stroke-width="1.6"/><path d="M2978.4 33.6H2980.4M2978.4 37.2H2980.4M2978.4 40.8H2980.4" stroke="#c0c0c0" stroke-width="1.6"/>
</svg>
</body></html>
